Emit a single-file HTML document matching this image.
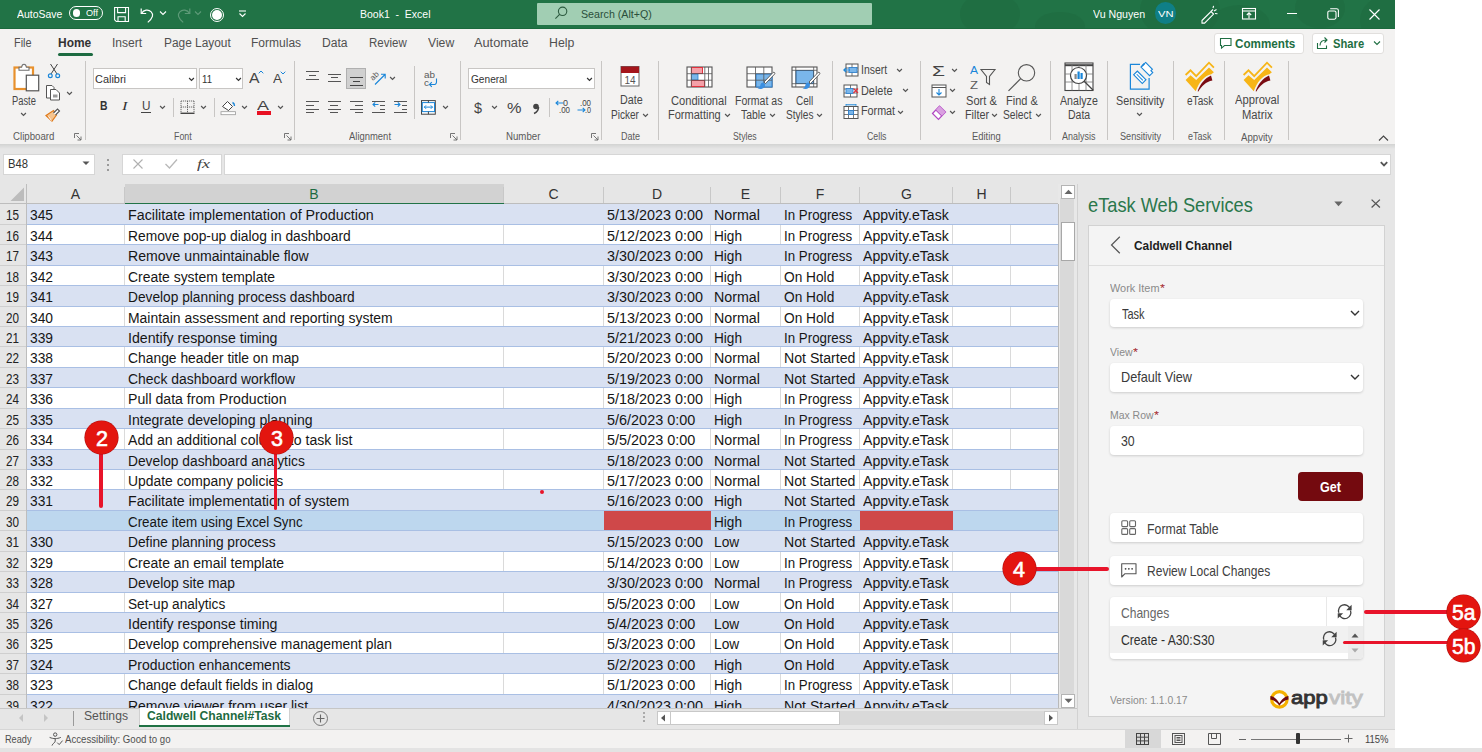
<!DOCTYPE html>
<html><head><meta charset="utf-8">
<style>
*{box-sizing:border-box;margin:0;padding:0}
html,body{width:1482px;height:752px;overflow:hidden;background:#fff;font-family:"Liberation Sans",sans-serif}
.ab{position:absolute}
.tx{white-space:pre}
svg{overflow:visible}
</style></head><body>
<div class="ab" style="left:0;top:0;width:1395px;height:29px;background:#217346;overflow:hidden">
<div class="ab" style="left:960px;top:-8px;width:60px;height:44px;border-radius:50%;background:#1f6a40;opacity:.55"></div>
<div class="ab" style="left:1140px;top:-20px;width:80px;height:60px;border-radius:50%;background:#1f6a40;opacity:.55"></div>
<div class="ab" style="left:1210px;top:5px;width:60px;height:40px;border-radius:50%;background:#1f6a40;opacity:.55"></div>
<div class="ab" style="left:1295px;top:-12px;width:50px;height:40px;border-radius:50%;background:#1f6a40;opacity:.55"></div>
<div class="ab" style="left:1035px;top:12px;width:50px;height:28px;border-radius:50%;background:#1f6a40;opacity:.55"></div>
<div class="ab" style="left:1360px;top:-5px;width:60px;height:50px;border-radius:50%;background:#1f6a40;opacity:.55"></div>
<div class="ab" style="left:0;top:27.5px;width:1395px;height:1.5px;background:#1b693d"></div>
</div>
<div class="ab tx" style="left:17.00px;top:9.00px;font-size:11px;line-height:11px;color:#ffffff;font-weight:normal;font-family:'Liberation Sans';transform:scaleX(0.9497);transform-origin:0 0;">AutoSave</div>
<div class="ab" style="left:68.5px;top:5.5px;width:34px;height:14.5px;border:1.2px solid #fff;border-radius:8px"></div>
<div class="ab" style="left:72.5px;top:9px;width:7.5px;height:7.5px;border-radius:50%;background:#fff"></div>
<div class="ab tx" style="left:85.50px;top:9.00px;font-size:9px;line-height:9px;color:#ffffff;font-weight:normal;font-family:'Liberation Sans';transform:scaleX(1.0136);transform-origin:0 0;">Off</div>
<svg class="ab" style="left:113px;top:6px" width="18" height="18" viewBox="0 0 18 18" fill="none" stroke="#fff" stroke-width="1.1">
<path d="M1.6 1.5H15.5V15.5H3.3L1.6 13.8Z"/><path d="M4.6 1.5V6.6H12.6V1.5"/><path d="M5 15.5V10.8H12.2V15.5"/></svg>
<svg class="ab" style="left:139px;top:6px" width="18" height="18" viewBox="0 0 18 18" fill="none" stroke="#fff" stroke-width="1.2">
<path d="M2.2 2.5v5h5"/><path d="M2.6 7.2c2-3.4 6.8-4.2 9.6-1.4 2.6 2.6 1.8 6.2-3.4 10.6"/></svg>
<svg class="ab" style="left:159px;top:10px" width="8" height="6"><path d="M1 1.5l3 3 3-3" fill="none" stroke="#fff" stroke-width="1.1"/></svg>
<svg class="ab" style="left:174px;top:6px" width="18" height="18" viewBox="0 0 18 18" fill="none" stroke="#5e9a78" stroke-width="1.2">
<path d="M15.8 2.5v5h-5"/><path d="M15.4 7.2c-2-3.4-6.8-4.2-9.6-1.4-2.6 2.6-1.8 6.2 3.4 10.6"/></svg>
<svg class="ab" style="left:194px;top:10px" width="8" height="6"><path d="M1 1.5l3 3 3-3" fill="none" stroke="#5e9a78" stroke-width="1.1"/></svg>
<div class="ab" style="left:209.5px;top:7.5px;width:14.5px;height:14.5px;border-radius:50%;border:1.3px solid #fff"></div>
<div class="ab" style="left:211.8px;top:9.8px;width:10px;height:10px;border-radius:50%;background:#fff"></div>
<svg class="ab" style="left:238px;top:10px" width="9" height="8"><path d="M1 1h7" stroke="#fff" stroke-width="1.1"/><path d="M1.5 3.5l3 3 3-3" fill="none" stroke="#fff" stroke-width="1.1"/></svg>
<div class="ab tx" style="left:359.50px;top:9.00px;font-size:11px;line-height:11px;color:#ffffff;font-weight:normal;font-family:'Liberation Sans';transform:scaleX(0.9530);transform-origin:0 0;">Book1  -  Excel</div>
<div class="ab" style="left:537px;top:2.5px;width:334.5px;height:22.5px;background:#a1ceb3;border-radius:1px"></div>
<svg class="ab" style="left:553px;top:5px" width="16" height="16" viewBox="0 0 16 16" fill="none" stroke="#2c5a3f" stroke-width="1.1">
<circle cx="9.6" cy="6.3" r="4.2"/><path d="M6.6 9.3L2.4 13.6"/></svg>
<div class="ab tx" style="left:581.20px;top:9.00px;font-size:11px;line-height:11px;color:#2b4f3b;font-weight:normal;font-family:'Liberation Sans';transform:scaleX(0.9705);transform-origin:0 0;">Search (Alt+Q)</div>
<div class="ab tx" style="left:1093.00px;top:9.00px;font-size:11px;line-height:11px;color:#ffffff;font-weight:normal;font-family:'Liberation Sans';transform:scaleX(0.9645);transform-origin:0 0;">Vu Nguyen</div>
<div class="ab" style="left:1154.5px;top:2.2px;width:21.6px;height:21.6px;border-radius:50%;background:#0f7f87"></div>
<div class="ab tx" style="left:1157.50px;top:9.00px;font-size:9.5px;line-height:9.5px;color:#ffffff;font-weight:normal;font-family:'Liberation Sans';transform:scaleX(1.1745);transform-origin:0 0;">VN</div>
<svg class="ab" style="left:1199px;top:5px" width="20" height="18" viewBox="0 0 20 18" fill="none" stroke="#fff" stroke-width="1.1">
<path d="M3 15.5l9-9 2.6 2.6-9 9H3z"/><path d="M12 6.5l2-2M15 6l2.5-1.5M14 3l.6-2.2M16 8.5l2.5.3"/></svg>
<svg class="ab" style="left:1241px;top:7px" width="17" height="14" viewBox="0 0 17 14" fill="none" stroke="#fff" stroke-width="1.1">
<rect x="1.5" y="1.5" width="13" height="10.5"/><path d="M1.5 4h13"/><path d="M8 11.5V6M5.8 8l2.2-2.2L10.2 8"/></svg>
<div class="ab" style="left:1286.5px;top:12.5px;width:10px;height:1.1px;background:#fff"></div>
<svg class="ab" style="left:1326px;top:7px" width="14" height="14" viewBox="0 0 14 14" fill="none" stroke="#fff" stroke-width="1.1">
<rect x="1.8" y="4" width="8.2" height="8.2" rx="1.6"/><path d="M4.2 1.8h6.4a1.8 1.8 0 0 1 1.8 1.8v6.4"/></svg>
<svg class="ab" style="left:1368px;top:7.5px" width="13" height="13" viewBox="0 0 13 13" stroke="#fff" stroke-width="1.15"><path d="M1.5 1.5l10 10M11.5 1.5l-10 10"/></svg>
<div class="ab" style="left:0;top:29px;width:1395px;height:30px;background:#f3f2f1"></div>
<div class="ab tx" style="left:13.70px;top:37.00px;font-size:12px;line-height:12px;color:#505050;font-weight:normal;font-family:'Liberation Sans';transform:scaleX(0.9051);transform-origin:0 0;">File</div>
<div class="ab tx" style="left:111.80px;top:37.00px;font-size:12px;line-height:12px;color:#505050;font-weight:normal;font-family:'Liberation Sans';transform:scaleX(1.0063);transform-origin:0 0;">Insert</div>
<div class="ab tx" style="left:163.50px;top:37.00px;font-size:12px;line-height:12px;color:#505050;font-weight:normal;font-family:'Liberation Sans';transform:scaleX(0.9898);transform-origin:0 0;">Page Layout</div>
<div class="ab tx" style="left:251.40px;top:37.00px;font-size:12px;line-height:12px;color:#505050;font-weight:normal;font-family:'Liberation Sans';transform:scaleX(1.0018);transform-origin:0 0;">Formulas</div>
<div class="ab tx" style="left:322.00px;top:37.00px;font-size:12px;line-height:12px;color:#505050;font-weight:normal;font-family:'Liberation Sans';transform:scaleX(1.0100);transform-origin:0 0;">Data</div>
<div class="ab tx" style="left:368.70px;top:37.00px;font-size:12px;line-height:12px;color:#505050;font-weight:normal;font-family:'Liberation Sans';transform:scaleX(0.9582);transform-origin:0 0;">Review</div>
<div class="ab tx" style="left:427.50px;top:37.00px;font-size:12px;line-height:12px;color:#505050;font-weight:normal;font-family:'Liberation Sans';transform:scaleX(1.0158);transform-origin:0 0;">View</div>
<div class="ab tx" style="left:474.40px;top:37.00px;font-size:12px;line-height:12px;color:#505050;font-weight:normal;font-family:'Liberation Sans';transform:scaleX(1.0630);transform-origin:0 0;">Automate</div>
<div class="ab tx" style="left:549.20px;top:37.00px;font-size:12px;line-height:12px;color:#505050;font-weight:normal;font-family:'Liberation Sans';transform:scaleX(1.0251);transform-origin:0 0;">Help</div>
<div class="ab tx" style="left:58.40px;top:37.00px;font-size:12px;line-height:12px;color:#333;font-weight:bold;font-family:'Liberation Sans';transform:scaleX(0.9958);transform-origin:0 0;">Home</div>
<div class="ab" style="left:58px;top:52.8px;width:34.5px;height:3px;background:#1d6b41;border-radius:1.5px"></div>
<div class="ab" style="left:1213.5px;top:33px;width:90px;height:20.5px;background:#fff;border:1px solid #e1dfdd;border-radius:3px"></div>
<svg class="ab" style="left:1219px;top:36.5px" width="14" height="13" viewBox="0 0 14 13" fill="none" stroke="#1e6e42" stroke-width="1.1"><path d="M1.5 1.5h10.5v7H5.5l-3 2.6V8.5H1.5z"/></svg>
<div class="ab tx" style="left:1234.80px;top:38.00px;font-size:12px;line-height:12px;color:#1e6e42;font-weight:bold;font-family:'Liberation Sans';transform:scaleX(0.9724);transform-origin:0 0;">Comments</div>
<div class="ab" style="left:1311.5px;top:33px;width:72.5px;height:20.5px;background:#fff;border:1px solid #e1dfdd;border-radius:3px"></div>
<svg class="ab" style="left:1316px;top:35px" width="14" height="15" viewBox="0 0 14 15" fill="none" stroke="#1e6e42" stroke-width="1.1"><path d="M1.5 8v5.5h9v-3"/><path d="M4 10.5c0-4 2.5-5.5 6.5-5.5M8.5 2.5L11 5l-2.5 2.5"/></svg>
<div class="ab tx" style="left:1333.40px;top:38.00px;font-size:12px;line-height:12px;color:#1e6e42;font-weight:bold;font-family:'Liberation Sans';transform:scaleX(0.9325);transform-origin:0 0;">Share</div>
<svg class="ab" style="left:1373px;top:40px" width="8" height="6"><path d="M1 1.5l3 3 3-3" fill="none" stroke="#1e6e42" stroke-width="1.1"/></svg>
<div class="ab" style="left:0;top:58px;width:1395px;height:86px;background:#f3f2f1"></div>
<svg class="ab" style="left:12px;top:62px" width="30" height="32" viewBox="0 0 30 32"><rect x="2.5" y="5.5" width="18.5" height="21.5" fill="#fff" stroke="#e8912d" stroke-width="2.2"/><path d="M7 8.2V5.2h2.6c.3-2 1.6-3 2.4-3s2.1 1 2.4 3H17v3z" fill="#fff" stroke="#707070" stroke-width="1.1"/><rect x="14.3" y="13.2" width="12.4" height="15.6" fill="#fff" stroke="#555" stroke-width="1.2"/></svg>
<div class="ab tx" style="left:12.20px;top:95.00px;font-size:12px;line-height:12px;color:#474747;font-weight:normal;font-family:'Liberation Sans';transform:scaleX(0.7789);transform-origin:0 0;">Paste</div>
<svg class="ab" style="left:20.2px;top:112px" width="7" height="4.5"><path d="M1.1 1l2.4 2.4L5.9 1" fill="none" stroke="#555" stroke-width="1.2"/></svg>
<svg class="ab" style="left:47px;top:63px" width="14" height="16" viewBox="0 0 14 16"><path d="M3.5 1l6.5 10M10.5 1L4 11" stroke="#444" stroke-width="1"/><circle cx="3.3" cy="12.7" r="1.9" fill="none" stroke="#1a86d9" stroke-width="1.2"/><circle cx="10.7" cy="12.7" r="1.9" fill="none" stroke="#1a86d9" stroke-width="1.2"/></svg>
<svg class="ab" style="left:45px;top:84px" width="17" height="17" viewBox="0 0 17 17"><path d="M1.5 1.5h5.5l2 2v10.5H1.5z" fill="#fff" stroke="#555" stroke-width="1"/><path d="M5.5 5.5h5.5l3.5 3.5v7H5.5z" fill="#fff" stroke="#555" stroke-width="1"/><rect x="8" y="10.5" width="4.5" height="3" fill="#999"/></svg>
<svg class="ab" style="left:65.9px;top:90.7px" width="7" height="4.5"><path d="M1.1 1l2.4 2.4L5.9 1" fill="none" stroke="#555" stroke-width="1.2"/></svg>
<svg class="ab" style="left:45px;top:106px" width="17" height="16" viewBox="0 0 17 16"><path d="M1 9.5l7.5-5 3 4.5-4.5 6z" fill="#f5c48f" stroke="#e07a1a" stroke-width="1.2"/><path d="M8.5 7l4-4 2 2-4 4" fill="#fff" stroke="#555" stroke-width="1.1"/><path d="M3.5 10.5l3 4" stroke="#fff" stroke-width="1"/></svg>
<div class="ab tx" style="left:13.00px;top:132.00px;font-size:10px;line-height:10px;color:#5a5a5a;font-weight:normal;font-family:'Liberation Sans';transform:scaleX(0.9672);transform-origin:0 0;">Clipboard</div>
<svg class="ab" style="left:74px;top:133px" width="8" height="8" viewBox="0 0 8 8" fill="none" stroke="#666" stroke-width=".9"><path d="M.5 5V.5H5"/><path d="M2.5 2.5l4.5 4.5M7 3.5V7H3.5"/></svg>
<div class="ab" style="left:84.5px;top:61px;width:1px;height:78.5px;background:#c8c6c4"></div>
<div class="ab" style="left:92.8px;top:68.2px;width:104.6px;height:20.6px;background:#fff;border:1px solid #c8c6c4"></div>
<div class="ab tx" style="left:94.80px;top:74.00px;font-size:11.5px;line-height:11.5px;color:#333;font-weight:normal;font-family:'Liberation Sans';transform:scaleX(0.9512);transform-origin:0 0;">Calibri</div>
<svg class="ab" style="left:188.1px;top:77px" width="7" height="4.5"><path d="M1.1 1l2.4 2.4L5.9 1" fill="none" stroke="#333" stroke-width="1.2"/></svg>
<div class="ab" style="left:199.4px;top:68.2px;width:44px;height:20.6px;background:#fff;border:1px solid #c8c6c4"></div>
<div class="ab tx" style="left:201.50px;top:74.00px;font-size:11.5px;line-height:11.5px;color:#333;font-weight:normal;font-family:'Liberation Sans';transform:scaleX(0.8377);transform-origin:0 0;">11</div>
<svg class="ab" style="left:234.5px;top:77px" width="7" height="4.5"><path d="M1.1 1l2.4 2.4L5.9 1" fill="none" stroke="#333" stroke-width="1.2"/></svg>
<div class="ab tx" style="left:249.40px;top:70.00px;font-size:15px;line-height:15px;color:#444;font-weight:normal;font-family:'Liberation Sans';transform:scaleX(1.0495);transform-origin:0 0;">A</div>
<svg class="ab" style="left:258px;top:70px" width="6" height="4" viewBox="0 0 6 4"><path d="M.7 3.3L3 1l2.3 2.3" fill="none" stroke="#1a86d9" stroke-width="1"/></svg>
<div class="ab tx" style="left:272.80px;top:73.00px;font-size:12.5px;line-height:12.5px;color:#444;font-weight:normal;font-family:'Liberation Sans';transform:scaleX(1.0795);transform-origin:0 0;">A</div>
<svg class="ab" style="left:280px;top:71px" width="6" height="4" viewBox="0 0 6 4"><path d="M.7 .7L3 3l2.3-2.3" fill="none" stroke="#1a86d9" stroke-width="1"/></svg>
<div class="ab tx" style="left:99.90px;top:100.00px;font-size:12px;line-height:12px;color:#333;font-weight:bold;font-family:'Liberation Sans';transform:scaleX(0.8654);transform-origin:0 0;">B</div>
<div class="ab tx" style="left:121.50px;top:100.00px;font-size:12.5px;line-height:12.5px;color:#333;font-weight:normal;font-family:'Liberation Serif';font-style:italic;transform:scaleX(1.3213);transform-origin:0 0;">I</div>
<div class="ab tx" style="left:141.70px;top:100.00px;font-size:12px;line-height:12px;color:#444;font-weight:normal;font-family:'Liberation Sans';transform:scaleX(0.9808);transform-origin:0 0;">U</div>
<div class="ab" style="left:141.2px;top:112.2px;width:9.5px;height:1px;background:#444"></div>
<svg class="ab" style="left:159.2px;top:105px" width="7" height="4.5"><path d="M1.1 1l2.4 2.4L5.9 1" fill="none" stroke="#555" stroke-width="1.2"/></svg>
<div class="ab" style="left:173.3px;top:98px;width:1px;height:19px;background:#c8c6c4"></div>
<svg class="ab" style="left:179.5px;top:100px" width="15" height="14" viewBox="0 0 15 14"><path d="M1 1h13M1 1v12M14 1v12M7.5 1v12M1 7h13" fill="none" stroke="#666" stroke-width="1" stroke-dasharray="1.2 .8"/><path d="M.5 13.3h14" stroke="#444" stroke-width="1.4"/></svg>
<svg class="ab" style="left:199.8px;top:105px" width="7" height="4.5"><path d="M1.1 1l2.4 2.4L5.9 1" fill="none" stroke="#555" stroke-width="1.2"/></svg>
<div class="ab" style="left:213.9px;top:98px;width:1px;height:19px;background:#c8c6c4"></div>
<svg class="ab" style="left:219.5px;top:99px" width="17" height="17" viewBox="0 0 17 17"><path d="M2.5 7.5l5-5 5 5-4 4z" fill="#fff" stroke="#444" stroke-width="1"/><path d="M12.5 3.5c1.5.7 2 2 2 3.5" fill="none" stroke="#1a86d9" stroke-width="1.4"/><rect x="1" y="12.7" width="14.5" height="3" fill="#fff" stroke="#999" stroke-width=".8"/></svg>
<svg class="ab" style="left:240.9px;top:105px" width="7" height="4.5"><path d="M1.1 1l2.4 2.4L5.9 1" fill="none" stroke="#555" stroke-width="1.2"/></svg>
<div class="ab tx" style="left:257.30px;top:100.00px;font-size:12.5px;line-height:12.5px;color:#444;font-weight:normal;font-family:'Liberation Sans';transform:scaleX(1.4393);transform-origin:0 0;">A</div>
<div class="ab" style="left:256.5px;top:111px;width:14.5px;height:3.5px;background:#e81123"></div>
<svg class="ab" style="left:276.8px;top:105px" width="7" height="4.5"><path d="M1.1 1l2.4 2.4L5.9 1" fill="none" stroke="#555" stroke-width="1.2"/></svg>
<div class="ab tx" style="left:173.60px;top:132.00px;font-size:10px;line-height:10px;color:#5a5a5a;font-weight:normal;font-family:'Liberation Sans';transform:scaleX(0.8846);transform-origin:0 0;">Font</div>
<svg class="ab" style="left:284px;top:133px" width="8" height="8" viewBox="0 0 8 8" fill="none" stroke="#666" stroke-width=".9"><path d="M.5 5V.5H5"/><path d="M2.5 2.5l4.5 4.5M7 3.5V7H3.5"/></svg>
<div class="ab" style="left:293.9px;top:61px;width:1px;height:78.5px;background:#c8c6c4"></div>
<div class="ab" style="left:306px;top:70.5px;width:13px;height:1.4px;background:#555"></div><div class="ab" style="left:309px;top:74.5px;width:7px;height:1.4px;background:#555"></div><div class="ab" style="left:306px;top:78.5px;width:13px;height:1.4px;background:#555"></div>
<div class="ab" style="left:327.8px;top:73.5px;width:13px;height:1.4px;background:#555"></div><div class="ab" style="left:330.8px;top:76.5px;width:7px;height:1.4px;background:#555"></div><div class="ab" style="left:327.8px;top:80.5px;width:13px;height:1.4px;background:#555"></div>
<div class="ab" style="left:346.2px;top:68px;width:19.8px;height:20.7px;background:#d0d0d0;border:1px solid #b0b0b0"></div>
<div class="ab" style="left:349.7px;top:76.5px;width:13px;height:1.4px;background:#444"></div><div class="ab" style="left:352.7px;top:80.5px;width:7px;height:1.4px;background:#444"></div><div class="ab" style="left:349.7px;top:84.5px;width:13px;height:1.4px;background:#444"></div>
<svg class="ab" style="left:370px;top:69px" width="17" height="17" viewBox="0 0 17 17"><text x="0" y="0" font-size="8" font-family="Liberation Sans" fill="#555" transform="translate(3,12) rotate(-45)">ab</text><path d="M5 15.5L15 5.5M11 5.2h4.2v4.2" fill="none" stroke="#1a86d9" stroke-width="1.1"/></svg>
<svg class="ab" style="left:389.1px;top:76px" width="7" height="4.5"><path d="M1.1 1l2.4 2.4L5.9 1" fill="none" stroke="#555" stroke-width="1.2"/></svg>
<div class="ab" style="left:306px;top:100.5px;width:13px;height:1.4px;background:#555"></div><div class="ab" style="left:306px;top:104.5px;width:8px;height:1.4px;background:#555"></div><div class="ab" style="left:306px;top:108.5px;width:13px;height:1.4px;background:#555"></div><div class="ab" style="left:306px;top:111.5px;width:8px;height:1.4px;background:#555"></div>
<div class="ab" style="left:327.8px;top:100.5px;width:13px;height:1.4px;background:#555"></div><div class="ab" style="left:330.3px;top:104.5px;width:8.0px;height:1.4px;background:#555"></div><div class="ab" style="left:327.8px;top:108.5px;width:13px;height:1.4px;background:#555"></div><div class="ab" style="left:330.3px;top:111.5px;width:8.0px;height:1.4px;background:#555"></div>
<div class="ab" style="left:349.7px;top:100.5px;width:13px;height:1.4px;background:#555"></div><div class="ab" style="left:354.7px;top:104.5px;width:8px;height:1.4px;background:#555"></div><div class="ab" style="left:349.7px;top:108.5px;width:13px;height:1.4px;background:#555"></div><div class="ab" style="left:354.7px;top:111.5px;width:8px;height:1.4px;background:#555"></div>
<div class="ab" style="left:372px;top:100.5px;width:13px;height:1.4px;background:#555"></div><div class="ab" style="left:380px;top:104.5px;width:5px;height:1.4px;background:#555"></div><div class="ab" style="left:380px;top:108.5px;width:5px;height:1.4px;background:#555"></div><div class="ab" style="left:372px;top:111.5px;width:13px;height:1.4px;background:#555"></div>
<svg class="ab" style="left:372px;top:102px" width="7" height="5" viewBox="0 0 7 5"><path d="M6.5 2.5H1M3.2 .3L1 2.5l2.2 2.2" fill="none" stroke="#1a86d9" stroke-width="1.1"/></svg>
<div class="ab" style="left:393.8px;top:100.5px;width:13px;height:1.4px;background:#555"></div><div class="ab" style="left:401.8px;top:104.5px;width:5px;height:1.4px;background:#555"></div><div class="ab" style="left:401.8px;top:108.5px;width:5px;height:1.4px;background:#555"></div><div class="ab" style="left:393.8px;top:111.5px;width:13px;height:1.4px;background:#555"></div>
<svg class="ab" style="left:393.8px;top:102px" width="7" height="5" viewBox="0 0 7 5"><path d="M.5 2.5H6M3.8 .3L6 2.5 3.8 4.7" fill="none" stroke="#1a86d9" stroke-width="1.1"/></svg>
<div class="ab" style="left:414px;top:66px;width:1px;height:53px;background:#c8c6c4"></div>
<div class="ab tx" style="left:423.60px;top:71.00px;font-size:9px;line-height:9px;color:#5a5a5a;font-weight:normal;font-family:'Liberation Sans';transform:scaleX(1.0988);transform-origin:0 0;">ab</div>
<div class="ab tx" style="left:423.60px;top:79.00px;font-size:9px;line-height:9px;color:#5a5a5a;font-weight:normal;font-family:'Liberation Sans';transform:scaleX(1.1111);transform-origin:0 0;">c</div>
<svg class="ab" style="left:428px;top:78px" width="10" height="9" viewBox="0 0 10 9"><path d="M8.5 .5v3.5a2.5 2.5 0 0 1-2.5 2.5H1.5M3.8 4.2L1.5 6.5l2.3 2.3" fill="none" stroke="#1a86d9" stroke-width="1.1"/></svg>
<svg class="ab" style="left:421px;top:99.5px" width="15" height="15" viewBox="0 0 15 15"><rect x=".5" y=".6" width="13.8" height="13.6" fill="#fff" stroke="#444" stroke-width="1"/><rect x="1.3" y="2.6" width="12.2" height="9" fill="#fff" stroke="#1a86d9" stroke-width="1"/><path d="M7.4 .6v2M7.4 11.6v2.6" stroke="#444" stroke-width="1"/><path d="M3.3 7.1h8.2M5 5.4L3.3 7.1 5 8.8M9.8 5.4l1.7 1.7-1.7 1.7" fill="none" stroke="#1a86d9" stroke-width="1"/></svg>
<svg class="ab" style="left:441.6px;top:105px" width="7" height="4.5"><path d="M1.1 1l2.4 2.4L5.9 1" fill="none" stroke="#555" stroke-width="1.2"/></svg>
<div class="ab tx" style="left:349.00px;top:132.00px;font-size:10px;line-height:10px;color:#5a5a5a;font-weight:normal;font-family:'Liberation Sans';transform:scaleX(0.9445);transform-origin:0 0;">Alignment</div>
<svg class="ab" style="left:450px;top:133px" width="8" height="8" viewBox="0 0 8 8" fill="none" stroke="#666" stroke-width=".9"><path d="M.5 5V.5H5"/><path d="M2.5 2.5l4.5 4.5M7 3.5V7H3.5"/></svg>
<div class="ab" style="left:459.8px;top:61px;width:1px;height:78.5px;background:#c8c6c4"></div>
<div class="ab" style="left:468.2px;top:68.2px;width:126.5px;height:20.6px;background:#fff;border:1px solid #c8c6c4"></div>
<div class="ab tx" style="left:470.80px;top:74.00px;font-size:11.5px;line-height:11.5px;color:#333;font-weight:normal;font-family:'Liberation Sans';transform:scaleX(0.8799);transform-origin:0 0;">General</div>
<svg class="ab" style="left:585.5px;top:77px" width="7" height="4.5"><path d="M1.1 1l2.4 2.4L5.9 1" fill="none" stroke="#333" stroke-width="1.2"/></svg>
<div class="ab tx" style="left:473.80px;top:101.00px;font-size:14px;line-height:14px;color:#444;font-weight:normal;font-family:'Liberation Sans';transform:scaleX(1.0275);transform-origin:0 0;">$</div>
<svg class="ab" style="left:491.1px;top:105px" width="7" height="4.5"><path d="M1.1 1l2.4 2.4L5.9 1" fill="none" stroke="#555" stroke-width="1.2"/></svg>
<div class="ab tx" style="left:506.50px;top:101.00px;font-size:14px;line-height:14px;color:#444;font-weight:normal;font-family:'Liberation Sans';transform:scaleX(1.1648);transform-origin:0 0;">%</div>
<svg class="ab" style="left:531px;top:103px" width="10" height="11" viewBox="0 0 10 11"><circle cx="5" cy="3.5" r="2.8" fill="#444"/><path d="M7.5 4c0 3-2 5.5-4.5 6.5" fill="none" stroke="#444" stroke-width="1.6"/></svg>
<div class="ab" style="left:549px;top:98px;width:1px;height:19px;background:#c8c6c4"></div>
<div class="ab tx" style="left:563.00px;top:99.00px;font-size:8.5px;line-height:8.5px;color:#444;font-weight:normal;font-family:'Liberation Sans';transform:scaleX(1.0577);transform-origin:0 0;">0</div>
<div class="ab tx" style="left:558.50px;top:106.00px;font-size:8.5px;line-height:8.5px;color:#444;font-weight:normal;font-family:'Liberation Sans';transform:scaleX(0.9309);transform-origin:0 0;">.00</div>
<svg class="ab" style="left:555px;top:100px" width="9" height="6" viewBox="0 0 9 6"><path d="M8.5 3H1M3.3.8L1 3l2.3 2.2" fill="none" stroke="#1a86d9" stroke-width="1.1"/></svg>
<div class="ab tx" style="left:580.00px;top:99.00px;font-size:8.5px;line-height:8.5px;color:#444;font-weight:normal;font-family:'Liberation Sans';transform:scaleX(0.9309);transform-origin:0 0;">.00</div>
<div class="ab tx" style="left:585.00px;top:106.00px;font-size:8.5px;line-height:8.5px;color:#444;font-weight:normal;font-family:'Liberation Sans';transform:scaleX(0.8464);transform-origin:0 0;">.0</div>
<svg class="ab" style="left:577px;top:107px" width="9" height="6" viewBox="0 0 9 6"><path d="M.5 3H8M5.7.8L8 3 5.7 5.2" fill="none" stroke="#1a86d9" stroke-width="1.1"/></svg>
<div class="ab tx" style="left:506.20px;top:132.00px;font-size:10px;line-height:10px;color:#5a5a5a;font-weight:normal;font-family:'Liberation Sans';transform:scaleX(0.9672);transform-origin:0 0;">Number</div>
<svg class="ab" style="left:591px;top:133px" width="8" height="8" viewBox="0 0 8 8" fill="none" stroke="#666" stroke-width=".9"><path d="M.5 5V.5H5"/><path d="M2.5 2.5l4.5 4.5M7 3.5V7H3.5"/></svg>
<div class="ab" style="left:601.3px;top:61px;width:1px;height:78.5px;background:#c8c6c4"></div>
<svg class="ab" style="left:620px;top:65px" width="20" height="22" viewBox="0 0 20 22"><rect x="1" y="1.5" width="18" height="19.5" fill="#fff" stroke="#666" stroke-width="1"/><rect x="1" y="1.5" width="18" height="6.5" fill="#a4151b"/><text x="10" y="18.5" font-size="10" text-anchor="middle" font-family="Liberation Sans" fill="#555">14</text></svg>
<div class="ab tx" style="left:619.50px;top:94.00px;font-size:12px;line-height:12px;color:#474747;font-weight:normal;font-family:'Liberation Sans';transform:scaleX(0.8955);transform-origin:0 0;">Date</div>
<div class="ab tx" style="left:611.30px;top:109.00px;font-size:12px;line-height:12px;color:#474747;font-weight:normal;font-family:'Liberation Sans';transform:scaleX(0.8338);transform-origin:0 0;">Picker</div>
<svg class="ab" style="left:642.3px;top:112.5px" width="7" height="4.5"><path d="M1.1 1l2.4 2.4L5.9 1" fill="none" stroke="#555" stroke-width="1.2"/></svg>
<div class="ab tx" style="left:620.70px;top:132.00px;font-size:10px;line-height:10px;color:#5a5a5a;font-weight:normal;font-family:'Liberation Sans';transform:scaleX(0.8995);transform-origin:0 0;">Date</div>
<div class="ab" style="left:658.0px;top:61px;width:1px;height:78.5px;background:#c8c6c4"></div>
<svg class="ab" style="left:686px;top:65.5px" width="27" height="22" viewBox="0 0 27 22"><rect x="1" y="1" width="25" height="20" fill="#fff" stroke="#555" stroke-width="1.1"/><rect x="5.5" y="1.5" width="11" height="6" fill="#f4a0a8" stroke="#e0323e" stroke-width="1"/><rect x="5.5" y="8" width="6.5" height="6" fill="#7ab6ea" stroke="#2a7fcf" stroke-width=".8"/><rect x="5.5" y="14.5" width="13" height="6" fill="#f4a0a8" stroke="#e0323e" stroke-width="1"/><path d="M1 7.7h25M1 14.2h25M5.3 1v20M18.8 1v20M22.5 1v20" stroke="#555" stroke-width=".8" fill="none"/></svg>
<div class="ab tx" style="left:671.30px;top:95.00px;font-size:12px;line-height:12px;color:#474747;font-weight:normal;font-family:'Liberation Sans';transform:scaleX(0.9277);transform-origin:0 0;">Conditional</div>
<div class="ab tx" style="left:667.60px;top:109.00px;font-size:12px;line-height:12px;color:#474747;font-weight:normal;font-family:'Liberation Sans';transform:scaleX(0.9189);transform-origin:0 0;">Formatting</div>
<svg class="ab" style="left:723.9px;top:112.5px" width="7" height="4.5"><path d="M1.1 1l2.4 2.4L5.9 1" fill="none" stroke="#555" stroke-width="1.2"/></svg>
<svg class="ab" style="left:745.5px;top:65.5px" width="30" height="25" viewBox="0 0 30 25"><rect x="1" y="1" width="25" height="20" fill="#fff" stroke="#555" stroke-width="1.1"/><rect x="10" y="8" width="16" height="13" fill="#7ab6ea" stroke="#2a7fcf" stroke-width="1"/><path d="M1 7.7h25M1 14.2h25M9.5 1v20M17.8 1v20" stroke="#555" stroke-width=".8" fill="none"/><path d="M27 6.5c1.2-.8 2.5.5 1.6 1.6l-9 9.5-1.6-1.6z" fill="#fff" stroke="#555" stroke-width=".9"/><path d="M17.5 16.5c-2 0-3 1.2-3.2 3-.2 1.7-1.3 2.5-2.8 2.7 3.4 1.6 7.4.4 7.6-3.8z" fill="#3a8ee0"/></svg>
<div class="ab tx" style="left:734.60px;top:95.00px;font-size:12px;line-height:12px;color:#474747;font-weight:normal;font-family:'Liberation Sans';transform:scaleX(0.8776);transform-origin:0 0;">Format as</div>
<div class="ab tx" style="left:740.80px;top:109.00px;font-size:12px;line-height:12px;color:#474747;font-weight:normal;font-family:'Liberation Sans';transform:scaleX(0.8645);transform-origin:0 0;">Table</div>
<svg class="ab" style="left:768.9px;top:112.5px" width="7" height="4.5"><path d="M1.1 1l2.4 2.4L5.9 1" fill="none" stroke="#555" stroke-width="1.2"/></svg>
<svg class="ab" style="left:791.3px;top:65.5px" width="30" height="25" viewBox="0 0 30 25"><rect x="1" y="1" width="25" height="20" fill="#fff" stroke="#555" stroke-width="1.1"/><rect x="5" y="4.5" width="17.5" height="13" fill="#7ab6ea" stroke="#2a7fcf" stroke-width="1"/><path d="M1 4.3h25M1 17.7h25M4.8 1v20M22.7 1v20" stroke="#555" stroke-width=".8" fill="none"/><path d="M27 6.5c1.2-.8 2.5.5 1.6 1.6l-9 9.5-1.6-1.6z" fill="#fff" stroke="#555" stroke-width=".9"/><path d="M17.5 16.5c-2 0-3 1.2-3.2 3-.2 1.7-1.3 2.5-2.8 2.7 3.4 1.6 7.4.4 7.6-3.8z" fill="#3a8ee0"/></svg>
<div class="ab tx" style="left:795.50px;top:95.00px;font-size:12px;line-height:12px;color:#474747;font-weight:normal;font-family:'Liberation Sans';transform:scaleX(0.8369);transform-origin:0 0;">Cell</div>
<div class="ab tx" style="left:785.70px;top:109.00px;font-size:12px;line-height:12px;color:#474747;font-weight:normal;font-family:'Liberation Sans';transform:scaleX(0.8416);transform-origin:0 0;">Styles</div>
<svg class="ab" style="left:815.9px;top:112.5px" width="7" height="4.5"><path d="M1.1 1l2.4 2.4L5.9 1" fill="none" stroke="#555" stroke-width="1.2"/></svg>
<div class="ab tx" style="left:733.30px;top:132.00px;font-size:10px;line-height:10px;color:#5a5a5a;font-weight:normal;font-family:'Liberation Sans';transform:scaleX(0.8703);transform-origin:0 0;">Styles</div>
<div class="ab" style="left:832.1px;top:61px;width:1px;height:78.5px;background:#c8c6c4"></div>
<svg class="ab" style="left:842.5px;top:62.5px" width="16" height="14" viewBox="0 0 16 14"><rect x="3" y="1" width="12" height="12" fill="#fff" stroke="#555" stroke-width="1"/><path d="M3 5h12M3 9h12M9 1v12" stroke="#555" stroke-width=".8"/><rect x="6" y="4.5" width="8" height="5" fill="#7ab6ea" stroke="#2a7fcf" stroke-width=".8"/><path d="M7 7H.8M3 4.8L.8 7 3 9.2" fill="none" stroke="#1a86d9" stroke-width="1.1"/></svg>
<div class="ab tx" style="left:860.70px;top:64.00px;font-size:12px;line-height:12px;color:#474747;font-weight:normal;font-family:'Liberation Sans';transform:scaleX(0.8697);transform-origin:0 0;">Insert</div>
<svg class="ab" style="left:895.6px;top:67.5px" width="7" height="4.5"><path d="M1.1 1l2.4 2.4L5.9 1" fill="none" stroke="#555" stroke-width="1.2"/></svg>
<svg class="ab" style="left:842.5px;top:83.5px" width="16" height="14" viewBox="0 0 16 14"><rect x="1" y="1" width="13" height="12" fill="#fff" stroke="#555" stroke-width="1"/><path d="M1 5h13M1 9h13M7.5 1v12" stroke="#555" stroke-width=".8"/><rect x="3" y="4.5" width="7" height="5" fill="#7ab6ea" stroke="#2a7fcf" stroke-width=".8"/><path d="M10.5 4.5l4.5 4.5M15 4.5l-4.5 4.5" stroke="#e0323e" stroke-width="1.2"/></svg>
<div class="ab tx" style="left:860.70px;top:85.00px;font-size:12px;line-height:12px;color:#474747;font-weight:normal;font-family:'Liberation Sans';transform:scaleX(0.9081);transform-origin:0 0;">Delete</div>
<svg class="ab" style="left:901.7px;top:88px" width="7" height="4.5"><path d="M1.1 1l2.4 2.4L5.9 1" fill="none" stroke="#555" stroke-width="1.2"/></svg>
<svg class="ab" style="left:842.5px;top:104px" width="16" height="15" viewBox="0 0 16 15"><rect x="1" y="2.5" width="14" height="12" fill="#fff" stroke="#555" stroke-width="1"/><path d="M1 6.5h14M1 10.5h14M5.5 2.5v12M10.5 2.5v12" stroke="#555" stroke-width=".8"/><rect x="5.5" y="6.5" width="5" height="4" fill="#7ab6ea" stroke="#2a7fcf" stroke-width=".8"/><path d="M3 .8h10M3 .2v1.5M13 .2v1.5" stroke="#1a86d9" stroke-width="1"/></svg>
<div class="ab tx" style="left:860.70px;top:105.00px;font-size:12px;line-height:12px;color:#474747;font-weight:normal;font-family:'Liberation Sans';transform:scaleX(0.8973);transform-origin:0 0;">Format</div>
<svg class="ab" style="left:896.7px;top:109.5px" width="7" height="4.5"><path d="M1.1 1l2.4 2.4L5.9 1" fill="none" stroke="#555" stroke-width="1.2"/></svg>
<div class="ab tx" style="left:866.70px;top:132.00px;font-size:10px;line-height:10px;color:#5a5a5a;font-weight:normal;font-family:'Liberation Sans';transform:scaleX(0.8773);transform-origin:0 0;">Cells</div>
<div class="ab" style="left:920.3px;top:61px;width:1px;height:78.5px;background:#c8c6c4"></div>
<div class="ab tx" style="left:931.60px;top:63.00px;font-size:15px;line-height:15px;color:#444;font-weight:normal;font-family:'Liberation Sans';transform:scaleX(1.4020);transform-origin:0 0;">Σ</div>
<svg class="ab" style="left:950.8px;top:67.5px" width="7" height="4.5"><path d="M1.1 1l2.4 2.4L5.9 1" fill="none" stroke="#555" stroke-width="1.2"/></svg>
<svg class="ab" style="left:930.5px;top:83.5px" width="16" height="14" viewBox="0 0 16 14"><rect x="1" y="1" width="14" height="12" fill="#fff" stroke="#555" stroke-width="1"/><path d="M1 3.5h14" stroke="#555" stroke-width="1"/><path d="M8 5v6M5.5 8.5L8 11l2.5-2.5" fill="none" stroke="#1a86d9" stroke-width="1.1"/></svg>
<svg class="ab" style="left:949.1px;top:88px" width="7" height="4.5"><path d="M1.1 1l2.4 2.4L5.9 1" fill="none" stroke="#555" stroke-width="1.2"/></svg>
<svg class="ab" style="left:930.5px;top:104px" width="16" height="15" viewBox="0 0 16 15"><path d="M1.5 9.5l7-7.5 6 6-7 7.5z" fill="#fff" stroke="#b146c2" stroke-width="1.2"/><path d="M5 6l6 6" stroke="#b146c2" stroke-width="1.2"/><path d="M8.5 2l6 6-3.5 3.7-6-6z" fill="#d9a0e0"/></svg>
<svg class="ab" style="left:948.5px;top:109.5px" width="7" height="4.5"><path d="M1.1 1l2.4 2.4L5.9 1" fill="none" stroke="#555" stroke-width="1.2"/></svg>
<div class="ab tx" style="left:970.00px;top:65.00px;font-size:11px;line-height:11px;color:#1a86d9;font-weight:normal;font-family:'Liberation Sans';transform:scaleX(1.0904);transform-origin:0 0;">A</div>
<div class="ab tx" style="left:970.00px;top:80.00px;font-size:11px;line-height:11px;color:#5a5a5a;font-weight:normal;font-family:'Liberation Sans';transform:scaleX(1.1906);transform-origin:0 0;">Z</div>
<svg class="ab" style="left:980px;top:68px" width="16" height="18" viewBox="0 0 16 18"><path d="M1 1.5h14L9.5 8.5v8l-3-2v-6z" fill="none" stroke="#555" stroke-width="1.1"/></svg>
<div class="ab tx" style="left:966.20px;top:95.00px;font-size:12px;line-height:12px;color:#474747;font-weight:normal;font-family:'Liberation Sans';transform:scaleX(0.9237);transform-origin:0 0;">Sort &amp;</div>
<div class="ab tx" style="left:964.60px;top:109.00px;font-size:12px;line-height:12px;color:#474747;font-weight:normal;font-family:'Liberation Sans';transform:scaleX(0.9000);transform-origin:0 0;">Filter</div>
<svg class="ab" style="left:991.4px;top:112.5px" width="7" height="4.5"><path d="M1.1 1l2.4 2.4L5.9 1" fill="none" stroke="#555" stroke-width="1.2"/></svg>
<svg class="ab" style="left:1007px;top:62.5px" width="30" height="29" viewBox="0 0 30 29"><circle cx="19.5" cy="9.8" r="8.2" fill="none" stroke="#555" stroke-width="1.1"/><path d="M13.7 15.6L1.5 27.8" stroke="#555" stroke-width="1.2"/></svg>
<div class="ab tx" style="left:1006.10px;top:95.00px;font-size:12px;line-height:12px;color:#474747;font-weight:normal;font-family:'Liberation Sans';transform:scaleX(0.9169);transform-origin:0 0;">Find &amp;</div>
<div class="ab tx" style="left:1002.90px;top:109.00px;font-size:12px;line-height:12px;color:#474747;font-weight:normal;font-family:'Liberation Sans';transform:scaleX(0.8545);transform-origin:0 0;">Select</div>
<svg class="ab" style="left:1034.5px;top:112.5px" width="7" height="4.5"><path d="M1.1 1l2.4 2.4L5.9 1" fill="none" stroke="#555" stroke-width="1.2"/></svg>
<div class="ab tx" style="left:971.60px;top:132.00px;font-size:10px;line-height:10px;color:#5a5a5a;font-weight:normal;font-family:'Liberation Sans';transform:scaleX(0.9386);transform-origin:0 0;">Editing</div>
<div class="ab" style="left:1050.3px;top:61px;width:1px;height:78.5px;background:#c8c6c4"></div>
<svg class="ab" style="left:1063.5px;top:61.5px" width="31" height="31" viewBox="0 0 31 31"><rect x="1" y="1" width="28" height="27.5" fill="#fff" stroke="#444" stroke-width="1.1"/><path d="M1 3.2h28" stroke="#444" stroke-width="2"/><path d="M1 12h28M1 20h28M8 3v25.5M15 3v25.5M22 3v25.5" stroke="#777" stroke-width=".8"/><circle cx="14.5" cy="13.5" r="8" fill="#fff" stroke="#444" stroke-width="1.2"/><path d="M20.2 19.2l9 9" stroke="#444" stroke-width="1.3"/><rect x="10.5" y="12" width="2.2" height="5" fill="#888"/><rect x="13.5" y="9.5" width="2.2" height="7.5" fill="#1a86d9"/><rect x="16.5" y="11" width="2.2" height="6" fill="#1a86d9"/></svg>
<div class="ab tx" style="left:1060.10px;top:95.00px;font-size:12px;line-height:12px;color:#474747;font-weight:normal;font-family:'Liberation Sans';transform:scaleX(0.8854);transform-origin:0 0;">Analyze</div>
<div class="ab tx" style="left:1068.10px;top:109.00px;font-size:12px;line-height:12px;color:#474747;font-weight:normal;font-family:'Liberation Sans';transform:scaleX(0.8758);transform-origin:0 0;">Data</div>
<div class="ab tx" style="left:1062.30px;top:132.00px;font-size:10px;line-height:10px;color:#5a5a5a;font-weight:normal;font-family:'Liberation Sans';transform:scaleX(0.8970);transform-origin:0 0;">Analysis</div>
<div class="ab" style="left:1106.5px;top:61px;width:1px;height:78.5px;background:#c8c6c4"></div>
<svg class="ab" style="left:1128px;top:62px" width="28" height="28" viewBox="0 0 28 28"><path d="M12 2.3H2.4V27.2H21.1V16" fill="none" stroke="#1a86d9" stroke-width="1.2"/><g transform="translate(11.8,15.3) rotate(45)"><rect x="-6.1" y="-2.6" width="12.2" height="5.2" fill="#fff" stroke="#1a86d9" stroke-width="1.1"/><path d="M-4.3 0H4.3" stroke="#1a86d9" stroke-width="1"/></g><g transform="translate(19.6,7.1) rotate(45)"><path d="M-6.1 -3.3H3.5V-1.2H6.1V3.3H-6.1Z" fill="#fff" stroke="#1a86d9" stroke-width="1.1"/><path d="M-6.1 -1.6V1.8" stroke="#1a86d9" stroke-width="1.6"/></g></svg>
<div class="ab tx" style="left:1115.80px;top:95.00px;font-size:12px;line-height:12px;color:#474747;font-weight:normal;font-family:'Liberation Sans';transform:scaleX(0.8960);transform-origin:0 0;">Sensitivity</div>
<svg class="ab" style="left:1135.9px;top:111.7px" width="7" height="4.5"><path d="M1.1 1l2.4 2.4L5.9 1" fill="none" stroke="#555" stroke-width="1.2"/></svg>
<div class="ab tx" style="left:1119.50px;top:132.00px;font-size:10px;line-height:10px;color:#5a5a5a;font-weight:normal;font-family:'Liberation Sans';transform:scaleX(0.9108);transform-origin:0 0;">Sensitivity</div>
<div class="ab" style="left:1173.0px;top:61px;width:1px;height:78.5px;background:#c8c6c4"></div>
<svg class="ab" style="left:1175px;top:58px" width="50" height="37" viewBox="0 0 50 37"><path d="M10.6 17L15.5 12.3 21.2 18.2 34 4.7 38.9 9.6" fill="none" stroke="#f7b516" stroke-width="1.8" stroke-linejoin="miter"/><path d="M10.6 21.9L15.5 17.2 21.2 22.1 34 9.4 38.9 14.3 36.4 16.2C29 18 24 24 20.8 33.2z" fill="#f7b516"/><path d="M22.6 33.2C25 26 30 20 36 17.4L37.4 22.4C31 23.5 26.5 28 23.4 33.4z" fill="#7a0c12"/></svg>
<div class="ab tx" style="left:1186.50px;top:95.00px;font-size:12px;line-height:12px;color:#474747;font-weight:normal;font-family:'Liberation Sans';transform:scaleX(0.8390);transform-origin:0 0;">eTask</div>
<div class="ab tx" style="left:1187.50px;top:132.00px;font-size:10px;line-height:10px;color:#5a5a5a;font-weight:normal;font-family:'Liberation Sans';transform:scaleX(0.8958);transform-origin:0 0;">eTask</div>
<div class="ab" style="left:1223.8px;top:61px;width:1px;height:78.5px;background:#c8c6c4"></div>
<svg class="ab" style="left:1232.5px;top:58px" width="50" height="37" viewBox="0 0 50 37"><path d="M10.6 17L15.5 12.3 21.2 18.2 34 4.7 38.9 9.6" fill="none" stroke="#f7b516" stroke-width="1.8" stroke-linejoin="miter"/><path d="M10.6 21.9L15.5 17.2 21.2 22.1 34 9.4 38.9 14.3 36.4 16.2C29 18 24 24 20.8 33.2z" fill="#f7b516"/><path d="M22.6 33.2C25 26 30 20 36 17.4L37.4 22.4C31 23.5 26.5 28 23.4 33.4z" fill="#7a0c12"/></svg>
<div class="ab tx" style="left:1234.60px;top:94.00px;font-size:12px;line-height:12px;color:#474747;font-weight:normal;font-family:'Liberation Sans';transform:scaleX(0.9333);transform-origin:0 0;">Approval</div>
<div class="ab tx" style="left:1242.20px;top:109.00px;font-size:12px;line-height:12px;color:#474747;font-weight:normal;font-family:'Liberation Sans';transform:scaleX(0.9337);transform-origin:0 0;">Matrix</div>
<div class="ab tx" style="left:1241.10px;top:133.00px;font-size:10px;line-height:10px;color:#5a5a5a;font-weight:normal;font-family:'Liberation Sans';transform:scaleX(0.9636);transform-origin:0 0;">Appvity</div>
<div class="ab" style="left:1288.1px;top:61px;width:1px;height:78.5px;background:#c8c6c4"></div>
<svg class="ab" style="left:1378px;top:135px" width="11" height="6" viewBox="0 0 11 6"><path d="M1 5.5L5.5 1 10 5.5" fill="none" stroke="#444" stroke-width="1.1"/></svg>
<div class="ab" style="left:0;top:144px;width:1395px;height:40px;background:#e6e6e6"></div>
<div class="ab" style="left:0;top:144px;width:1395px;height:5px;background:linear-gradient(#d2d3d2,#e6e6e6)"></div>
<div class="ab" style="left:2.5px;top:153.5px;width:92px;height:21px;background:#fff;border:1px solid #d6d6d6"></div>
<div class="ab tx" style="left:7.50px;top:158.00px;font-size:12px;line-height:12px;color:#333;font-weight:normal;font-family:'Liberation Sans';transform:scaleX(0.9367);transform-origin:0 0;">B48</div>
<svg class="ab" style="left:82px;top:161px" width="8" height="5"><path d="M0.5 0.5h7L4 4z" fill="#555"/></svg>
<div class="ab" style="left:107px;top:159px;width:2px;height:2px;background:#9a9a9a"></div>
<div class="ab" style="left:107px;top:164px;width:2px;height:2px;background:#9a9a9a"></div>
<div class="ab" style="left:107px;top:169px;width:2px;height:2px;background:#9a9a9a"></div>
<div class="ab" style="left:121.5px;top:153.5px;width:100px;height:21px;background:#fff;border:1px solid #d6d6d6"></div>
<svg class="ab" style="left:132px;top:158px" width="12" height="12"><path d="M1.5 1.5l9 9M10.5 1.5l-9 9" stroke="#b0b0b0" stroke-width="1.1"/></svg>
<svg class="ab" style="left:164px;top:158px" width="14" height="12"><path d="M1.5 6l4 4 7.5-8.5" fill="none" stroke="#b8b8b8" stroke-width="1.3"/></svg>
<div class="ab tx" style="left:197.00px;top:157.00px;font-size:13px;line-height:13px;color:#444;font-weight:normal;font-family:'Liberation Serif';font-style:italic;transform:scaleX(1.3857);transform-origin:0 0;">fx</div>
<div class="ab" style="left:224px;top:153.5px;width:1167px;height:21px;background:#fff;border:1px solid #d6d6d6"></div>
<svg class="ab" style="left:1379.5px;top:161px" width="8" height="6"><path d="M.8 1.2l3.2 3.3 3.2-3.3" fill="none" stroke="#555" stroke-width="1.8"/></svg>
<div class="ab" style="left:0;top:184px;width:1058px;height:524px;overflow:hidden">
<div class="ab" style="left:0;top:-184px;width:1058px;height:752px">
<div class="ab" style="left:0;top:184px;width:1058px;height:20px;background:#e6e6e6"></div>
<svg class="ab" style="left:0;top:184px" width="26" height="20"><polygon points="24,3.5 24,17 10.5,17" fill="#bcbcbc"/></svg>
<div class="ab tx" style="left:70.50px;top:187.00px;font-size:14px;line-height:14px;color:#333;font-weight:normal;font-family:'Liberation Sans';width:10px;text-align:center;">A</div>
<div class="ab" style="left:124.5px;top:184px;width:379.0px;height:19px;background:#d2d2d2"></div>
<div class="ab tx" style="left:309.00px;top:187.00px;font-size:14px;line-height:14px;color:#1e6b41;font-weight:normal;font-family:'Liberation Sans';width:10px;text-align:center;">B</div>
<div class="ab" style="left:124.0px;top:187px;width:1px;height:16.5px;background:#c8c8c8"></div>
<div class="ab tx" style="left:548.50px;top:187.00px;font-size:14px;line-height:14px;color:#333;font-weight:normal;font-family:'Liberation Sans';width:10px;text-align:center;">C</div>
<div class="ab" style="left:503.0px;top:187px;width:1px;height:16.5px;background:#c8c8c8"></div>
<div class="ab tx" style="left:652.00px;top:187.00px;font-size:14px;line-height:14px;color:#333;font-weight:normal;font-family:'Liberation Sans';width:10px;text-align:center;">D</div>
<div class="ab" style="left:603.0px;top:187px;width:1px;height:16.5px;background:#c8c8c8"></div>
<div class="ab tx" style="left:740.50px;top:187.00px;font-size:14px;line-height:14px;color:#333;font-weight:normal;font-family:'Liberation Sans';width:10px;text-align:center;">E</div>
<div class="ab" style="left:710.0px;top:187px;width:1px;height:16.5px;background:#c8c8c8"></div>
<div class="ab tx" style="left:815.00px;top:187.00px;font-size:14px;line-height:14px;color:#333;font-weight:normal;font-family:'Liberation Sans';width:10px;text-align:center;">F</div>
<div class="ab" style="left:780.0px;top:187px;width:1px;height:16.5px;background:#c8c8c8"></div>
<div class="ab tx" style="left:901.00px;top:187.00px;font-size:14px;line-height:14px;color:#333;font-weight:normal;font-family:'Liberation Sans';width:10px;text-align:center;">G</div>
<div class="ab" style="left:859.0px;top:187px;width:1px;height:16.5px;background:#c8c8c8"></div>
<div class="ab tx" style="left:976.50px;top:187.00px;font-size:14px;line-height:14px;color:#333;font-weight:normal;font-family:'Liberation Sans';width:10px;text-align:center;">H</div>
<div class="ab" style="left:952.0px;top:187px;width:1px;height:16.5px;background:#c8c8c8"></div>
<div class="ab" style="left:1010.0px;top:187px;width:1px;height:16.5px;background:#c8c8c8"></div>
<div class="ab" style="left:0;top:204px;width:26px;height:504px;background:#e6e6e6"></div>
<div class="ab" style="left:26px;top:184px;width:1px;height:524px;background:#bdbdbd"></div>
<div class="ab" style="left:27px;top:204px;width:1031px;height:20px;background:#d9e1f2"></div>
<div class="ab tx" style="left:6.00px;top:208.00px;font-size:14px;line-height:14px;color:#222;font-weight:normal;font-family:'Liberation Sans';transform:scaleX(0.8348);transform-origin:0 0;">15</div>
<div class="ab" style="left:0;top:203px;width:26px;height:1px;background:#cfcfcf"></div>
<div class="ab tx" style="left:29.50px;top:208.00px;font-size:14px;line-height:14px;color:#161616;font-weight:normal;font-family:'Liberation Sans';transform:scaleX(0.9862);transform-origin:0 0;">345</div>
<div class="ab tx" style="left:127.50px;top:208.00px;font-size:14px;line-height:14px;color:#161616;font-weight:normal;font-family:'Liberation Sans';transform:scaleX(1.0189);transform-origin:0 0;">Facilitate implementation of Production</div>
<div class="ab tx" style="left:606.50px;top:208.00px;font-size:14px;line-height:14px;color:#161616;font-weight:normal;font-family:'Liberation Sans';transform:scaleX(1.0276);transform-origin:0 0;">5/13/2023 0:00</div>
<div class="ab tx" style="left:713.50px;top:208.00px;font-size:14px;line-height:14px;color:#161616;font-weight:normal;font-family:'Liberation Sans';transform:scaleX(1.0171);transform-origin:0 0;">Normal</div>
<div class="ab tx" style="left:783.50px;top:208.00px;font-size:14px;line-height:14px;color:#161616;font-weight:normal;font-family:'Liberation Sans';transform:scaleX(0.9513);transform-origin:0 0;">In Progress</div>
<div class="ab tx" style="left:862.50px;top:208.00px;font-size:14px;line-height:14px;color:#161616;font-weight:normal;font-family:'Liberation Sans';transform:scaleX(1.0049);transform-origin:0 0;">Appvity.eTask</div>
<div class="ab" style="left:27px;top:225px;width:1031px;height:19px;background:#ffffff"></div>
<div class="ab" style="left:124px;top:225px;width:1px;height:19px;background:#dadada"></div>
<div class="ab" style="left:503px;top:225px;width:1px;height:19px;background:#dadada"></div>
<div class="ab" style="left:603px;top:225px;width:1px;height:19px;background:#dadada"></div>
<div class="ab" style="left:710px;top:225px;width:1px;height:19px;background:#dadada"></div>
<div class="ab" style="left:780px;top:225px;width:1px;height:19px;background:#dadada"></div>
<div class="ab" style="left:859px;top:225px;width:1px;height:19px;background:#dadada"></div>
<div class="ab" style="left:952px;top:225px;width:1px;height:19px;background:#dadada"></div>
<div class="ab" style="left:1010px;top:225px;width:1px;height:19px;background:#dadada"></div>
<div class="ab" style="left:27px;top:224px;width:1031px;height:1px;background:#a9bfe4"></div>
<div class="ab tx" style="left:6.00px;top:229.00px;font-size:14px;line-height:14px;color:#222;font-weight:normal;font-family:'Liberation Sans';transform:scaleX(0.8348);transform-origin:0 0;">16</div>
<div class="ab" style="left:0;top:224px;width:26px;height:1px;background:#cfcfcf"></div>
<div class="ab tx" style="left:29.50px;top:229.00px;font-size:14px;line-height:14px;color:#161616;font-weight:normal;font-family:'Liberation Sans';transform:scaleX(0.9862);transform-origin:0 0;">344</div>
<div class="ab tx" style="left:127.50px;top:229.00px;font-size:14px;line-height:14px;color:#161616;font-weight:normal;font-family:'Liberation Sans';transform:scaleX(0.9866);transform-origin:0 0;">Remove pop-up dialog in dashboard</div>
<div class="ab tx" style="left:606.50px;top:229.00px;font-size:14px;line-height:14px;color:#161616;font-weight:normal;font-family:'Liberation Sans';transform:scaleX(1.0276);transform-origin:0 0;">5/12/2023 0:00</div>
<div class="ab tx" style="left:713.50px;top:229.00px;font-size:14px;line-height:14px;color:#161616;font-weight:normal;font-family:'Liberation Sans';transform:scaleX(0.9727);transform-origin:0 0;">High</div>
<div class="ab tx" style="left:783.50px;top:229.00px;font-size:14px;line-height:14px;color:#161616;font-weight:normal;font-family:'Liberation Sans';transform:scaleX(0.9513);transform-origin:0 0;">In Progress</div>
<div class="ab tx" style="left:862.50px;top:229.00px;font-size:14px;line-height:14px;color:#161616;font-weight:normal;font-family:'Liberation Sans';transform:scaleX(1.0049);transform-origin:0 0;">Appvity.eTask</div>
<div class="ab" style="left:27px;top:245px;width:1031px;height:20px;background:#d9e1f2"></div>
<div class="ab" style="left:27px;top:244px;width:1031px;height:1px;background:#a9bfe4"></div>
<div class="ab tx" style="left:6.00px;top:249.00px;font-size:14px;line-height:14px;color:#222;font-weight:normal;font-family:'Liberation Sans';transform:scaleX(0.8348);transform-origin:0 0;">17</div>
<div class="ab" style="left:0;top:244px;width:26px;height:1px;background:#cfcfcf"></div>
<div class="ab tx" style="left:29.50px;top:249.00px;font-size:14px;line-height:14px;color:#161616;font-weight:normal;font-family:'Liberation Sans';transform:scaleX(0.9862);transform-origin:0 0;">343</div>
<div class="ab tx" style="left:127.50px;top:249.00px;font-size:14px;line-height:14px;color:#161616;font-weight:normal;font-family:'Liberation Sans';transform:scaleX(1.0053);transform-origin:0 0;">Remove unmaintainable flow</div>
<div class="ab tx" style="left:606.50px;top:249.00px;font-size:14px;line-height:14px;color:#161616;font-weight:normal;font-family:'Liberation Sans';transform:scaleX(1.0276);transform-origin:0 0;">3/30/2023 0:00</div>
<div class="ab tx" style="left:713.50px;top:249.00px;font-size:14px;line-height:14px;color:#161616;font-weight:normal;font-family:'Liberation Sans';transform:scaleX(0.9727);transform-origin:0 0;">High</div>
<div class="ab tx" style="left:783.50px;top:249.00px;font-size:14px;line-height:14px;color:#161616;font-weight:normal;font-family:'Liberation Sans';transform:scaleX(0.9513);transform-origin:0 0;">In Progress</div>
<div class="ab tx" style="left:862.50px;top:249.00px;font-size:14px;line-height:14px;color:#161616;font-weight:normal;font-family:'Liberation Sans';transform:scaleX(1.0049);transform-origin:0 0;">Appvity.eTask</div>
<div class="ab" style="left:27px;top:266px;width:1031px;height:19px;background:#ffffff"></div>
<div class="ab" style="left:124px;top:266px;width:1px;height:19px;background:#dadada"></div>
<div class="ab" style="left:503px;top:266px;width:1px;height:19px;background:#dadada"></div>
<div class="ab" style="left:603px;top:266px;width:1px;height:19px;background:#dadada"></div>
<div class="ab" style="left:710px;top:266px;width:1px;height:19px;background:#dadada"></div>
<div class="ab" style="left:780px;top:266px;width:1px;height:19px;background:#dadada"></div>
<div class="ab" style="left:859px;top:266px;width:1px;height:19px;background:#dadada"></div>
<div class="ab" style="left:952px;top:266px;width:1px;height:19px;background:#dadada"></div>
<div class="ab" style="left:1010px;top:266px;width:1px;height:19px;background:#dadada"></div>
<div class="ab" style="left:27px;top:265px;width:1031px;height:1px;background:#a9bfe4"></div>
<div class="ab tx" style="left:6.00px;top:270.00px;font-size:14px;line-height:14px;color:#222;font-weight:normal;font-family:'Liberation Sans';transform:scaleX(0.8348);transform-origin:0 0;">18</div>
<div class="ab" style="left:0;top:265px;width:26px;height:1px;background:#cfcfcf"></div>
<div class="ab tx" style="left:29.50px;top:270.00px;font-size:14px;line-height:14px;color:#161616;font-weight:normal;font-family:'Liberation Sans';transform:scaleX(0.9862);transform-origin:0 0;">342</div>
<div class="ab tx" style="left:127.50px;top:270.00px;font-size:14px;line-height:14px;color:#161616;font-weight:normal;font-family:'Liberation Sans';transform:scaleX(0.9948);transform-origin:0 0;">Create system template</div>
<div class="ab tx" style="left:606.50px;top:270.00px;font-size:14px;line-height:14px;color:#161616;font-weight:normal;font-family:'Liberation Sans';transform:scaleX(1.0276);transform-origin:0 0;">3/30/2023 0:00</div>
<div class="ab tx" style="left:713.50px;top:270.00px;font-size:14px;line-height:14px;color:#161616;font-weight:normal;font-family:'Liberation Sans';transform:scaleX(0.9727);transform-origin:0 0;">High</div>
<div class="ab tx" style="left:783.50px;top:270.00px;font-size:14px;line-height:14px;color:#161616;font-weight:normal;font-family:'Liberation Sans';transform:scaleX(0.9790);transform-origin:0 0;">On Hold</div>
<div class="ab tx" style="left:862.50px;top:270.00px;font-size:14px;line-height:14px;color:#161616;font-weight:normal;font-family:'Liberation Sans';transform:scaleX(1.0049);transform-origin:0 0;">Appvity.eTask</div>
<div class="ab" style="left:27px;top:286px;width:1031px;height:20px;background:#d9e1f2"></div>
<div class="ab" style="left:27px;top:285px;width:1031px;height:1px;background:#a9bfe4"></div>
<div class="ab tx" style="left:6.00px;top:290.00px;font-size:14px;line-height:14px;color:#222;font-weight:normal;font-family:'Liberation Sans';transform:scaleX(0.8348);transform-origin:0 0;">19</div>
<div class="ab" style="left:0;top:285px;width:26px;height:1px;background:#cfcfcf"></div>
<div class="ab tx" style="left:29.50px;top:290.00px;font-size:14px;line-height:14px;color:#161616;font-weight:normal;font-family:'Liberation Sans';transform:scaleX(0.9862);transform-origin:0 0;">341</div>
<div class="ab tx" style="left:127.50px;top:290.00px;font-size:14px;line-height:14px;color:#161616;font-weight:normal;font-family:'Liberation Sans';transform:scaleX(0.9807);transform-origin:0 0;">Develop planning process dashboard</div>
<div class="ab tx" style="left:606.50px;top:290.00px;font-size:14px;line-height:14px;color:#161616;font-weight:normal;font-family:'Liberation Sans';transform:scaleX(1.0276);transform-origin:0 0;">3/30/2023 0:00</div>
<div class="ab tx" style="left:713.50px;top:290.00px;font-size:14px;line-height:14px;color:#161616;font-weight:normal;font-family:'Liberation Sans';transform:scaleX(1.0171);transform-origin:0 0;">Normal</div>
<div class="ab tx" style="left:783.50px;top:290.00px;font-size:14px;line-height:14px;color:#161616;font-weight:normal;font-family:'Liberation Sans';transform:scaleX(0.9790);transform-origin:0 0;">On Hold</div>
<div class="ab tx" style="left:862.50px;top:290.00px;font-size:14px;line-height:14px;color:#161616;font-weight:normal;font-family:'Liberation Sans';transform:scaleX(1.0049);transform-origin:0 0;">Appvity.eTask</div>
<div class="ab" style="left:27px;top:307px;width:1031px;height:19px;background:#ffffff"></div>
<div class="ab" style="left:124px;top:307px;width:1px;height:19px;background:#dadada"></div>
<div class="ab" style="left:503px;top:307px;width:1px;height:19px;background:#dadada"></div>
<div class="ab" style="left:603px;top:307px;width:1px;height:19px;background:#dadada"></div>
<div class="ab" style="left:710px;top:307px;width:1px;height:19px;background:#dadada"></div>
<div class="ab" style="left:780px;top:307px;width:1px;height:19px;background:#dadada"></div>
<div class="ab" style="left:859px;top:307px;width:1px;height:19px;background:#dadada"></div>
<div class="ab" style="left:952px;top:307px;width:1px;height:19px;background:#dadada"></div>
<div class="ab" style="left:1010px;top:307px;width:1px;height:19px;background:#dadada"></div>
<div class="ab" style="left:27px;top:306px;width:1031px;height:1px;background:#a9bfe4"></div>
<div class="ab tx" style="left:6.00px;top:311.00px;font-size:14px;line-height:14px;color:#222;font-weight:normal;font-family:'Liberation Sans';transform:scaleX(0.8348);transform-origin:0 0;">20</div>
<div class="ab" style="left:0;top:306px;width:26px;height:1px;background:#cfcfcf"></div>
<div class="ab tx" style="left:29.50px;top:311.00px;font-size:14px;line-height:14px;color:#161616;font-weight:normal;font-family:'Liberation Sans';transform:scaleX(0.9862);transform-origin:0 0;">340</div>
<div class="ab tx" style="left:127.50px;top:311.00px;font-size:14px;line-height:14px;color:#161616;font-weight:normal;font-family:'Liberation Sans';transform:scaleX(0.9942);transform-origin:0 0;">Maintain assessment and reporting system</div>
<div class="ab tx" style="left:606.50px;top:311.00px;font-size:14px;line-height:14px;color:#161616;font-weight:normal;font-family:'Liberation Sans';transform:scaleX(1.0276);transform-origin:0 0;">5/13/2023 0:00</div>
<div class="ab tx" style="left:713.50px;top:311.00px;font-size:14px;line-height:14px;color:#161616;font-weight:normal;font-family:'Liberation Sans';transform:scaleX(1.0171);transform-origin:0 0;">Normal</div>
<div class="ab tx" style="left:783.50px;top:311.00px;font-size:14px;line-height:14px;color:#161616;font-weight:normal;font-family:'Liberation Sans';transform:scaleX(0.9790);transform-origin:0 0;">On Hold</div>
<div class="ab tx" style="left:862.50px;top:311.00px;font-size:14px;line-height:14px;color:#161616;font-weight:normal;font-family:'Liberation Sans';transform:scaleX(1.0049);transform-origin:0 0;">Appvity.eTask</div>
<div class="ab" style="left:27px;top:327px;width:1031px;height:19px;background:#d9e1f2"></div>
<div class="ab" style="left:27px;top:326px;width:1031px;height:1px;background:#a9bfe4"></div>
<div class="ab tx" style="left:6.00px;top:331.00px;font-size:14px;line-height:14px;color:#222;font-weight:normal;font-family:'Liberation Sans';transform:scaleX(0.8348);transform-origin:0 0;">21</div>
<div class="ab" style="left:0;top:326px;width:26px;height:1px;background:#cfcfcf"></div>
<div class="ab tx" style="left:29.50px;top:331.00px;font-size:14px;line-height:14px;color:#161616;font-weight:normal;font-family:'Liberation Sans';transform:scaleX(0.9862);transform-origin:0 0;">339</div>
<div class="ab tx" style="left:127.50px;top:331.00px;font-size:14px;line-height:14px;color:#161616;font-weight:normal;font-family:'Liberation Sans';transform:scaleX(1.0111);transform-origin:0 0;">Identify response timing</div>
<div class="ab tx" style="left:606.50px;top:331.00px;font-size:14px;line-height:14px;color:#161616;font-weight:normal;font-family:'Liberation Sans';transform:scaleX(1.0276);transform-origin:0 0;">5/21/2023 0:00</div>
<div class="ab tx" style="left:713.50px;top:331.00px;font-size:14px;line-height:14px;color:#161616;font-weight:normal;font-family:'Liberation Sans';transform:scaleX(0.9727);transform-origin:0 0;">High</div>
<div class="ab tx" style="left:783.50px;top:331.00px;font-size:14px;line-height:14px;color:#161616;font-weight:normal;font-family:'Liberation Sans';transform:scaleX(0.9513);transform-origin:0 0;">In Progress</div>
<div class="ab tx" style="left:862.50px;top:331.00px;font-size:14px;line-height:14px;color:#161616;font-weight:normal;font-family:'Liberation Sans';transform:scaleX(1.0049);transform-origin:0 0;">Appvity.eTask</div>
<div class="ab" style="left:27px;top:347px;width:1031px;height:20px;background:#ffffff"></div>
<div class="ab" style="left:124px;top:347px;width:1px;height:20px;background:#dadada"></div>
<div class="ab" style="left:503px;top:347px;width:1px;height:20px;background:#dadada"></div>
<div class="ab" style="left:603px;top:347px;width:1px;height:20px;background:#dadada"></div>
<div class="ab" style="left:710px;top:347px;width:1px;height:20px;background:#dadada"></div>
<div class="ab" style="left:780px;top:347px;width:1px;height:20px;background:#dadada"></div>
<div class="ab" style="left:859px;top:347px;width:1px;height:20px;background:#dadada"></div>
<div class="ab" style="left:952px;top:347px;width:1px;height:20px;background:#dadada"></div>
<div class="ab" style="left:1010px;top:347px;width:1px;height:20px;background:#dadada"></div>
<div class="ab" style="left:27px;top:346px;width:1031px;height:1px;background:#a9bfe4"></div>
<div class="ab tx" style="left:6.00px;top:351.00px;font-size:14px;line-height:14px;color:#222;font-weight:normal;font-family:'Liberation Sans';transform:scaleX(0.8348);transform-origin:0 0;">22</div>
<div class="ab" style="left:0;top:346px;width:26px;height:1px;background:#cfcfcf"></div>
<div class="ab tx" style="left:29.50px;top:351.00px;font-size:14px;line-height:14px;color:#161616;font-weight:normal;font-family:'Liberation Sans';transform:scaleX(0.9862);transform-origin:0 0;">338</div>
<div class="ab tx" style="left:127.50px;top:351.00px;font-size:14px;line-height:14px;color:#161616;font-weight:normal;font-family:'Liberation Sans';transform:scaleX(0.9901);transform-origin:0 0;">Change header title on map</div>
<div class="ab tx" style="left:606.50px;top:351.00px;font-size:14px;line-height:14px;color:#161616;font-weight:normal;font-family:'Liberation Sans';transform:scaleX(1.0276);transform-origin:0 0;">5/20/2023 0:00</div>
<div class="ab tx" style="left:713.50px;top:351.00px;font-size:14px;line-height:14px;color:#161616;font-weight:normal;font-family:'Liberation Sans';transform:scaleX(1.0171);transform-origin:0 0;">Normal</div>
<div class="ab tx" style="left:783.50px;top:351.00px;font-size:14px;line-height:14px;color:#161616;font-weight:normal;font-family:'Liberation Sans';transform:scaleX(1.0085);transform-origin:0 0;">Not Started</div>
<div class="ab tx" style="left:862.50px;top:351.00px;font-size:14px;line-height:14px;color:#161616;font-weight:normal;font-family:'Liberation Sans';transform:scaleX(1.0049);transform-origin:0 0;">Appvity.eTask</div>
<div class="ab" style="left:27px;top:368px;width:1031px;height:19px;background:#d9e1f2"></div>
<div class="ab" style="left:27px;top:367px;width:1031px;height:1px;background:#a9bfe4"></div>
<div class="ab tx" style="left:6.00px;top:372.00px;font-size:14px;line-height:14px;color:#222;font-weight:normal;font-family:'Liberation Sans';transform:scaleX(0.8348);transform-origin:0 0;">23</div>
<div class="ab" style="left:0;top:367px;width:26px;height:1px;background:#cfcfcf"></div>
<div class="ab tx" style="left:29.50px;top:372.00px;font-size:14px;line-height:14px;color:#161616;font-weight:normal;font-family:'Liberation Sans';transform:scaleX(0.9862);transform-origin:0 0;">337</div>
<div class="ab tx" style="left:127.50px;top:372.00px;font-size:14px;line-height:14px;color:#161616;font-weight:normal;font-family:'Liberation Sans';transform:scaleX(0.9946);transform-origin:0 0;">Check dashboard workflow</div>
<div class="ab tx" style="left:606.50px;top:372.00px;font-size:14px;line-height:14px;color:#161616;font-weight:normal;font-family:'Liberation Sans';transform:scaleX(1.0276);transform-origin:0 0;">5/19/2023 0:00</div>
<div class="ab tx" style="left:713.50px;top:372.00px;font-size:14px;line-height:14px;color:#161616;font-weight:normal;font-family:'Liberation Sans';transform:scaleX(1.0171);transform-origin:0 0;">Normal</div>
<div class="ab tx" style="left:783.50px;top:372.00px;font-size:14px;line-height:14px;color:#161616;font-weight:normal;font-family:'Liberation Sans';transform:scaleX(1.0085);transform-origin:0 0;">Not Started</div>
<div class="ab tx" style="left:862.50px;top:372.00px;font-size:14px;line-height:14px;color:#161616;font-weight:normal;font-family:'Liberation Sans';transform:scaleX(1.0049);transform-origin:0 0;">Appvity.eTask</div>
<div class="ab" style="left:27px;top:388px;width:1031px;height:20px;background:#ffffff"></div>
<div class="ab" style="left:124px;top:388px;width:1px;height:20px;background:#dadada"></div>
<div class="ab" style="left:503px;top:388px;width:1px;height:20px;background:#dadada"></div>
<div class="ab" style="left:603px;top:388px;width:1px;height:20px;background:#dadada"></div>
<div class="ab" style="left:710px;top:388px;width:1px;height:20px;background:#dadada"></div>
<div class="ab" style="left:780px;top:388px;width:1px;height:20px;background:#dadada"></div>
<div class="ab" style="left:859px;top:388px;width:1px;height:20px;background:#dadada"></div>
<div class="ab" style="left:952px;top:388px;width:1px;height:20px;background:#dadada"></div>
<div class="ab" style="left:1010px;top:388px;width:1px;height:20px;background:#dadada"></div>
<div class="ab" style="left:27px;top:387px;width:1031px;height:1px;background:#a9bfe4"></div>
<div class="ab tx" style="left:6.00px;top:392.00px;font-size:14px;line-height:14px;color:#222;font-weight:normal;font-family:'Liberation Sans';transform:scaleX(0.8348);transform-origin:0 0;">24</div>
<div class="ab" style="left:0;top:387px;width:26px;height:1px;background:#cfcfcf"></div>
<div class="ab tx" style="left:29.50px;top:392.00px;font-size:14px;line-height:14px;color:#161616;font-weight:normal;font-family:'Liberation Sans';transform:scaleX(0.9862);transform-origin:0 0;">336</div>
<div class="ab tx" style="left:127.50px;top:392.00px;font-size:14px;line-height:14px;color:#161616;font-weight:normal;font-family:'Liberation Sans';transform:scaleX(1.0082);transform-origin:0 0;">Pull data from Production</div>
<div class="ab tx" style="left:606.50px;top:392.00px;font-size:14px;line-height:14px;color:#161616;font-weight:normal;font-family:'Liberation Sans';transform:scaleX(1.0276);transform-origin:0 0;">5/18/2023 0:00</div>
<div class="ab tx" style="left:713.50px;top:392.00px;font-size:14px;line-height:14px;color:#161616;font-weight:normal;font-family:'Liberation Sans';transform:scaleX(0.9727);transform-origin:0 0;">High</div>
<div class="ab tx" style="left:783.50px;top:392.00px;font-size:14px;line-height:14px;color:#161616;font-weight:normal;font-family:'Liberation Sans';transform:scaleX(0.9513);transform-origin:0 0;">In Progress</div>
<div class="ab tx" style="left:862.50px;top:392.00px;font-size:14px;line-height:14px;color:#161616;font-weight:normal;font-family:'Liberation Sans';transform:scaleX(1.0049);transform-origin:0 0;">Appvity.eTask</div>
<div class="ab" style="left:27px;top:409px;width:1031px;height:19px;background:#d9e1f2"></div>
<div class="ab" style="left:27px;top:408px;width:1031px;height:1px;background:#a9bfe4"></div>
<div class="ab tx" style="left:6.00px;top:413.00px;font-size:14px;line-height:14px;color:#222;font-weight:normal;font-family:'Liberation Sans';transform:scaleX(0.8348);transform-origin:0 0;">25</div>
<div class="ab" style="left:0;top:408px;width:26px;height:1px;background:#cfcfcf"></div>
<div class="ab tx" style="left:29.50px;top:413.00px;font-size:14px;line-height:14px;color:#161616;font-weight:normal;font-family:'Liberation Sans';transform:scaleX(0.9862);transform-origin:0 0;">335</div>
<div class="ab tx" style="left:127.50px;top:413.00px;font-size:14px;line-height:14px;color:#161616;font-weight:normal;font-family:'Liberation Sans';transform:scaleX(1.0047);transform-origin:0 0;">Integrate developing planning</div>
<div class="ab tx" style="left:606.50px;top:413.00px;font-size:14px;line-height:14px;color:#161616;font-weight:normal;font-family:'Liberation Sans';transform:scaleX(1.0313);transform-origin:0 0;">5/6/2023 0:00</div>
<div class="ab tx" style="left:713.50px;top:413.00px;font-size:14px;line-height:14px;color:#161616;font-weight:normal;font-family:'Liberation Sans';transform:scaleX(0.9727);transform-origin:0 0;">High</div>
<div class="ab tx" style="left:783.50px;top:413.00px;font-size:14px;line-height:14px;color:#161616;font-weight:normal;font-family:'Liberation Sans';transform:scaleX(0.9513);transform-origin:0 0;">In Progress</div>
<div class="ab tx" style="left:862.50px;top:413.00px;font-size:14px;line-height:14px;color:#161616;font-weight:normal;font-family:'Liberation Sans';transform:scaleX(1.0049);transform-origin:0 0;">Appvity.eTask</div>
<div class="ab" style="left:27px;top:429px;width:1031px;height:20px;background:#ffffff"></div>
<div class="ab" style="left:124px;top:429px;width:1px;height:20px;background:#dadada"></div>
<div class="ab" style="left:503px;top:429px;width:1px;height:20px;background:#dadada"></div>
<div class="ab" style="left:603px;top:429px;width:1px;height:20px;background:#dadada"></div>
<div class="ab" style="left:710px;top:429px;width:1px;height:20px;background:#dadada"></div>
<div class="ab" style="left:780px;top:429px;width:1px;height:20px;background:#dadada"></div>
<div class="ab" style="left:859px;top:429px;width:1px;height:20px;background:#dadada"></div>
<div class="ab" style="left:952px;top:429px;width:1px;height:20px;background:#dadada"></div>
<div class="ab" style="left:1010px;top:429px;width:1px;height:20px;background:#dadada"></div>
<div class="ab" style="left:27px;top:428px;width:1031px;height:1px;background:#a9bfe4"></div>
<div class="ab tx" style="left:6.00px;top:433.00px;font-size:14px;line-height:14px;color:#222;font-weight:normal;font-family:'Liberation Sans';transform:scaleX(0.8348);transform-origin:0 0;">26</div>
<div class="ab" style="left:0;top:428px;width:26px;height:1px;background:#cfcfcf"></div>
<div class="ab tx" style="left:29.50px;top:433.00px;font-size:14px;line-height:14px;color:#161616;font-weight:normal;font-family:'Liberation Sans';transform:scaleX(0.9862);transform-origin:0 0;">334</div>
<div class="ab tx" style="left:127.50px;top:433.00px;font-size:14px;line-height:14px;color:#161616;font-weight:normal;font-family:'Liberation Sans';transform:scaleX(1.0047);transform-origin:0 0;">Add an additional column to task list</div>
<div class="ab tx" style="left:606.50px;top:433.00px;font-size:14px;line-height:14px;color:#161616;font-weight:normal;font-family:'Liberation Sans';transform:scaleX(1.0313);transform-origin:0 0;">5/5/2023 0:00</div>
<div class="ab tx" style="left:713.50px;top:433.00px;font-size:14px;line-height:14px;color:#161616;font-weight:normal;font-family:'Liberation Sans';transform:scaleX(1.0171);transform-origin:0 0;">Normal</div>
<div class="ab tx" style="left:783.50px;top:433.00px;font-size:14px;line-height:14px;color:#161616;font-weight:normal;font-family:'Liberation Sans';transform:scaleX(0.9513);transform-origin:0 0;">In Progress</div>
<div class="ab tx" style="left:862.50px;top:433.00px;font-size:14px;line-height:14px;color:#161616;font-weight:normal;font-family:'Liberation Sans';transform:scaleX(1.0049);transform-origin:0 0;">Appvity.eTask</div>
<div class="ab" style="left:27px;top:450px;width:1031px;height:19px;background:#d9e1f2"></div>
<div class="ab" style="left:27px;top:449px;width:1031px;height:1px;background:#a9bfe4"></div>
<div class="ab tx" style="left:6.00px;top:454.00px;font-size:14px;line-height:14px;color:#222;font-weight:normal;font-family:'Liberation Sans';transform:scaleX(0.8348);transform-origin:0 0;">27</div>
<div class="ab" style="left:0;top:449px;width:26px;height:1px;background:#cfcfcf"></div>
<div class="ab tx" style="left:29.50px;top:454.00px;font-size:14px;line-height:14px;color:#161616;font-weight:normal;font-family:'Liberation Sans';transform:scaleX(0.9862);transform-origin:0 0;">333</div>
<div class="ab tx" style="left:127.50px;top:454.00px;font-size:14px;line-height:14px;color:#161616;font-weight:normal;font-family:'Liberation Sans';transform:scaleX(0.9832);transform-origin:0 0;">Develop dashboard analytics</div>
<div class="ab tx" style="left:606.50px;top:454.00px;font-size:14px;line-height:14px;color:#161616;font-weight:normal;font-family:'Liberation Sans';transform:scaleX(1.0276);transform-origin:0 0;">5/18/2023 0:00</div>
<div class="ab tx" style="left:713.50px;top:454.00px;font-size:14px;line-height:14px;color:#161616;font-weight:normal;font-family:'Liberation Sans';transform:scaleX(1.0171);transform-origin:0 0;">Normal</div>
<div class="ab tx" style="left:783.50px;top:454.00px;font-size:14px;line-height:14px;color:#161616;font-weight:normal;font-family:'Liberation Sans';transform:scaleX(1.0085);transform-origin:0 0;">Not Started</div>
<div class="ab tx" style="left:862.50px;top:454.00px;font-size:14px;line-height:14px;color:#161616;font-weight:normal;font-family:'Liberation Sans';transform:scaleX(1.0049);transform-origin:0 0;">Appvity.eTask</div>
<div class="ab" style="left:27px;top:470px;width:1031px;height:19px;background:#ffffff"></div>
<div class="ab" style="left:124px;top:470px;width:1px;height:19px;background:#dadada"></div>
<div class="ab" style="left:503px;top:470px;width:1px;height:19px;background:#dadada"></div>
<div class="ab" style="left:603px;top:470px;width:1px;height:19px;background:#dadada"></div>
<div class="ab" style="left:710px;top:470px;width:1px;height:19px;background:#dadada"></div>
<div class="ab" style="left:780px;top:470px;width:1px;height:19px;background:#dadada"></div>
<div class="ab" style="left:859px;top:470px;width:1px;height:19px;background:#dadada"></div>
<div class="ab" style="left:952px;top:470px;width:1px;height:19px;background:#dadada"></div>
<div class="ab" style="left:1010px;top:470px;width:1px;height:19px;background:#dadada"></div>
<div class="ab" style="left:27px;top:469px;width:1031px;height:1px;background:#a9bfe4"></div>
<div class="ab tx" style="left:6.00px;top:474.00px;font-size:14px;line-height:14px;color:#222;font-weight:normal;font-family:'Liberation Sans';transform:scaleX(0.8348);transform-origin:0 0;">28</div>
<div class="ab" style="left:0;top:469px;width:26px;height:1px;background:#cfcfcf"></div>
<div class="ab tx" style="left:29.50px;top:474.00px;font-size:14px;line-height:14px;color:#161616;font-weight:normal;font-family:'Liberation Sans';transform:scaleX(0.9862);transform-origin:0 0;">332</div>
<div class="ab tx" style="left:127.50px;top:474.00px;font-size:14px;line-height:14px;color:#161616;font-weight:normal;font-family:'Liberation Sans';transform:scaleX(0.9918);transform-origin:0 0;">Update company policies</div>
<div class="ab tx" style="left:606.50px;top:474.00px;font-size:14px;line-height:14px;color:#161616;font-weight:normal;font-family:'Liberation Sans';transform:scaleX(1.0276);transform-origin:0 0;">5/17/2023 0:00</div>
<div class="ab tx" style="left:713.50px;top:474.00px;font-size:14px;line-height:14px;color:#161616;font-weight:normal;font-family:'Liberation Sans';transform:scaleX(1.0171);transform-origin:0 0;">Normal</div>
<div class="ab tx" style="left:783.50px;top:474.00px;font-size:14px;line-height:14px;color:#161616;font-weight:normal;font-family:'Liberation Sans';transform:scaleX(1.0085);transform-origin:0 0;">Not Started</div>
<div class="ab tx" style="left:862.50px;top:474.00px;font-size:14px;line-height:14px;color:#161616;font-weight:normal;font-family:'Liberation Sans';transform:scaleX(1.0049);transform-origin:0 0;">Appvity.eTask</div>
<div class="ab" style="left:27px;top:490px;width:1031px;height:20px;background:#d9e1f2"></div>
<div class="ab" style="left:27px;top:489px;width:1031px;height:1px;background:#a9bfe4"></div>
<div class="ab tx" style="left:6.00px;top:494.00px;font-size:14px;line-height:14px;color:#222;font-weight:normal;font-family:'Liberation Sans';transform:scaleX(0.8348);transform-origin:0 0;">29</div>
<div class="ab" style="left:0;top:489px;width:26px;height:1px;background:#cfcfcf"></div>
<div class="ab tx" style="left:29.50px;top:494.00px;font-size:14px;line-height:14px;color:#161616;font-weight:normal;font-family:'Liberation Sans';transform:scaleX(0.9862);transform-origin:0 0;">331</div>
<div class="ab tx" style="left:127.50px;top:494.00px;font-size:14px;line-height:14px;color:#161616;font-weight:normal;font-family:'Liberation Sans';transform:scaleX(1.0121);transform-origin:0 0;">Facilitate implementation of system</div>
<div class="ab tx" style="left:606.50px;top:494.00px;font-size:14px;line-height:14px;color:#161616;font-weight:normal;font-family:'Liberation Sans';transform:scaleX(1.0276);transform-origin:0 0;">5/16/2023 0:00</div>
<div class="ab tx" style="left:713.50px;top:494.00px;font-size:14px;line-height:14px;color:#161616;font-weight:normal;font-family:'Liberation Sans';transform:scaleX(0.9727);transform-origin:0 0;">High</div>
<div class="ab tx" style="left:783.50px;top:494.00px;font-size:14px;line-height:14px;color:#161616;font-weight:normal;font-family:'Liberation Sans';transform:scaleX(1.0085);transform-origin:0 0;">Not Started</div>
<div class="ab tx" style="left:862.50px;top:494.00px;font-size:14px;line-height:14px;color:#161616;font-weight:normal;font-family:'Liberation Sans';transform:scaleX(1.0049);transform-origin:0 0;">Appvity.eTask</div>
<div class="ab" style="left:27px;top:511px;width:1031px;height:19px;background:#bdd7ee"></div>
<div class="ab" style="left:27px;top:510px;width:1031px;height:1px;background:#a9bfe4"></div>
<div class="ab tx" style="left:6.00px;top:515.00px;font-size:14px;line-height:14px;color:#222;font-weight:normal;font-family:'Liberation Sans';transform:scaleX(0.8348);transform-origin:0 0;">30</div>
<div class="ab" style="left:0;top:510px;width:26px;height:1px;background:#cfcfcf"></div>
<div class="ab" style="left:603.5px;top:511px;width:107.0px;height:19px;background:#cf4849"></div>
<div class="ab" style="left:859.5px;top:511px;width:93.0px;height:19px;background:#cf4849"></div>
<div class="ab tx" style="left:127.50px;top:515.00px;font-size:14px;line-height:14px;color:#161616;font-weight:normal;font-family:'Liberation Sans';transform:scaleX(0.9553);transform-origin:0 0;">Create item using Excel Sync</div>
<div class="ab tx" style="left:713.50px;top:515.00px;font-size:14px;line-height:14px;color:#161616;font-weight:normal;font-family:'Liberation Sans';transform:scaleX(0.9727);transform-origin:0 0;">High</div>
<div class="ab tx" style="left:783.50px;top:515.00px;font-size:14px;line-height:14px;color:#161616;font-weight:normal;font-family:'Liberation Sans';transform:scaleX(0.9513);transform-origin:0 0;">In Progress</div>
<div class="ab" style="left:27px;top:531px;width:1031px;height:20px;background:#d9e1f2"></div>
<div class="ab" style="left:27px;top:530px;width:1031px;height:1px;background:#a9bfe4"></div>
<div class="ab tx" style="left:6.00px;top:535.00px;font-size:14px;line-height:14px;color:#222;font-weight:normal;font-family:'Liberation Sans';transform:scaleX(0.8348);transform-origin:0 0;">31</div>
<div class="ab" style="left:0;top:530px;width:26px;height:1px;background:#cfcfcf"></div>
<div class="ab tx" style="left:29.50px;top:535.00px;font-size:14px;line-height:14px;color:#161616;font-weight:normal;font-family:'Liberation Sans';transform:scaleX(0.9862);transform-origin:0 0;">330</div>
<div class="ab tx" style="left:127.50px;top:535.00px;font-size:14px;line-height:14px;color:#161616;font-weight:normal;font-family:'Liberation Sans';transform:scaleX(0.9821);transform-origin:0 0;">Define planning process</div>
<div class="ab tx" style="left:606.50px;top:535.00px;font-size:14px;line-height:14px;color:#161616;font-weight:normal;font-family:'Liberation Sans';transform:scaleX(1.0276);transform-origin:0 0;">5/15/2023 0:00</div>
<div class="ab tx" style="left:713.50px;top:535.00px;font-size:14px;line-height:14px;color:#161616;font-weight:normal;font-family:'Liberation Sans';transform:scaleX(0.9808);transform-origin:0 0;">Low</div>
<div class="ab tx" style="left:783.50px;top:535.00px;font-size:14px;line-height:14px;color:#161616;font-weight:normal;font-family:'Liberation Sans';transform:scaleX(1.0085);transform-origin:0 0;">Not Started</div>
<div class="ab tx" style="left:862.50px;top:535.00px;font-size:14px;line-height:14px;color:#161616;font-weight:normal;font-family:'Liberation Sans';transform:scaleX(1.0049);transform-origin:0 0;">Appvity.eTask</div>
<div class="ab" style="left:27px;top:552px;width:1031px;height:19px;background:#ffffff"></div>
<div class="ab" style="left:124px;top:552px;width:1px;height:19px;background:#dadada"></div>
<div class="ab" style="left:503px;top:552px;width:1px;height:19px;background:#dadada"></div>
<div class="ab" style="left:603px;top:552px;width:1px;height:19px;background:#dadada"></div>
<div class="ab" style="left:710px;top:552px;width:1px;height:19px;background:#dadada"></div>
<div class="ab" style="left:780px;top:552px;width:1px;height:19px;background:#dadada"></div>
<div class="ab" style="left:859px;top:552px;width:1px;height:19px;background:#dadada"></div>
<div class="ab" style="left:952px;top:552px;width:1px;height:19px;background:#dadada"></div>
<div class="ab" style="left:1010px;top:552px;width:1px;height:19px;background:#dadada"></div>
<div class="ab" style="left:27px;top:551px;width:1031px;height:1px;background:#a9bfe4"></div>
<div class="ab tx" style="left:6.00px;top:556.00px;font-size:14px;line-height:14px;color:#222;font-weight:normal;font-family:'Liberation Sans';transform:scaleX(0.8348);transform-origin:0 0;">32</div>
<div class="ab" style="left:0;top:551px;width:26px;height:1px;background:#cfcfcf"></div>
<div class="ab tx" style="left:29.50px;top:556.00px;font-size:14px;line-height:14px;color:#161616;font-weight:normal;font-family:'Liberation Sans';transform:scaleX(0.9862);transform-origin:0 0;">329</div>
<div class="ab tx" style="left:127.50px;top:556.00px;font-size:14px;line-height:14px;color:#161616;font-weight:normal;font-family:'Liberation Sans';transform:scaleX(0.9982);transform-origin:0 0;">Create an email template</div>
<div class="ab tx" style="left:606.50px;top:556.00px;font-size:14px;line-height:14px;color:#161616;font-weight:normal;font-family:'Liberation Sans';transform:scaleX(1.0276);transform-origin:0 0;">5/14/2023 0:00</div>
<div class="ab tx" style="left:713.50px;top:556.00px;font-size:14px;line-height:14px;color:#161616;font-weight:normal;font-family:'Liberation Sans';transform:scaleX(0.9808);transform-origin:0 0;">Low</div>
<div class="ab tx" style="left:783.50px;top:556.00px;font-size:14px;line-height:14px;color:#161616;font-weight:normal;font-family:'Liberation Sans';transform:scaleX(0.9513);transform-origin:0 0;">In Progress</div>
<div class="ab tx" style="left:862.50px;top:556.00px;font-size:14px;line-height:14px;color:#161616;font-weight:normal;font-family:'Liberation Sans';transform:scaleX(1.0049);transform-origin:0 0;">Appvity.eTask</div>
<div class="ab" style="left:27px;top:572px;width:1031px;height:20px;background:#d9e1f2"></div>
<div class="ab" style="left:27px;top:571px;width:1031px;height:1px;background:#a9bfe4"></div>
<div class="ab tx" style="left:6.00px;top:576.00px;font-size:14px;line-height:14px;color:#222;font-weight:normal;font-family:'Liberation Sans';transform:scaleX(0.8348);transform-origin:0 0;">33</div>
<div class="ab" style="left:0;top:571px;width:26px;height:1px;background:#cfcfcf"></div>
<div class="ab tx" style="left:29.50px;top:576.00px;font-size:14px;line-height:14px;color:#161616;font-weight:normal;font-family:'Liberation Sans';transform:scaleX(0.9862);transform-origin:0 0;">328</div>
<div class="ab tx" style="left:127.50px;top:576.00px;font-size:14px;line-height:14px;color:#161616;font-weight:normal;font-family:'Liberation Sans';transform:scaleX(0.9878);transform-origin:0 0;">Develop site map</div>
<div class="ab tx" style="left:606.50px;top:576.00px;font-size:14px;line-height:14px;color:#161616;font-weight:normal;font-family:'Liberation Sans';transform:scaleX(1.0276);transform-origin:0 0;">3/30/2023 0:00</div>
<div class="ab tx" style="left:713.50px;top:576.00px;font-size:14px;line-height:14px;color:#161616;font-weight:normal;font-family:'Liberation Sans';transform:scaleX(1.0171);transform-origin:0 0;">Normal</div>
<div class="ab tx" style="left:783.50px;top:576.00px;font-size:14px;line-height:14px;color:#161616;font-weight:normal;font-family:'Liberation Sans';transform:scaleX(0.9513);transform-origin:0 0;">In Progress</div>
<div class="ab tx" style="left:862.50px;top:576.00px;font-size:14px;line-height:14px;color:#161616;font-weight:normal;font-family:'Liberation Sans';transform:scaleX(1.0049);transform-origin:0 0;">Appvity.eTask</div>
<div class="ab" style="left:27px;top:593px;width:1031px;height:19px;background:#ffffff"></div>
<div class="ab" style="left:124px;top:593px;width:1px;height:19px;background:#dadada"></div>
<div class="ab" style="left:503px;top:593px;width:1px;height:19px;background:#dadada"></div>
<div class="ab" style="left:603px;top:593px;width:1px;height:19px;background:#dadada"></div>
<div class="ab" style="left:710px;top:593px;width:1px;height:19px;background:#dadada"></div>
<div class="ab" style="left:780px;top:593px;width:1px;height:19px;background:#dadada"></div>
<div class="ab" style="left:859px;top:593px;width:1px;height:19px;background:#dadada"></div>
<div class="ab" style="left:952px;top:593px;width:1px;height:19px;background:#dadada"></div>
<div class="ab" style="left:1010px;top:593px;width:1px;height:19px;background:#dadada"></div>
<div class="ab" style="left:27px;top:592px;width:1031px;height:1px;background:#a9bfe4"></div>
<div class="ab tx" style="left:6.00px;top:597.00px;font-size:14px;line-height:14px;color:#222;font-weight:normal;font-family:'Liberation Sans';transform:scaleX(0.8348);transform-origin:0 0;">34</div>
<div class="ab" style="left:0;top:592px;width:26px;height:1px;background:#cfcfcf"></div>
<div class="ab tx" style="left:29.50px;top:597.00px;font-size:14px;line-height:14px;color:#161616;font-weight:normal;font-family:'Liberation Sans';transform:scaleX(0.9862);transform-origin:0 0;">327</div>
<div class="ab tx" style="left:127.50px;top:597.00px;font-size:14px;line-height:14px;color:#161616;font-weight:normal;font-family:'Liberation Sans';transform:scaleX(0.9763);transform-origin:0 0;">Set-up analytics</div>
<div class="ab tx" style="left:606.50px;top:597.00px;font-size:14px;line-height:14px;color:#161616;font-weight:normal;font-family:'Liberation Sans';transform:scaleX(1.0313);transform-origin:0 0;">5/5/2023 0:00</div>
<div class="ab tx" style="left:713.50px;top:597.00px;font-size:14px;line-height:14px;color:#161616;font-weight:normal;font-family:'Liberation Sans';transform:scaleX(0.9808);transform-origin:0 0;">Low</div>
<div class="ab tx" style="left:783.50px;top:597.00px;font-size:14px;line-height:14px;color:#161616;font-weight:normal;font-family:'Liberation Sans';transform:scaleX(0.9790);transform-origin:0 0;">On Hold</div>
<div class="ab tx" style="left:862.50px;top:597.00px;font-size:14px;line-height:14px;color:#161616;font-weight:normal;font-family:'Liberation Sans';transform:scaleX(1.0049);transform-origin:0 0;">Appvity.eTask</div>
<div class="ab" style="left:27px;top:613px;width:1031px;height:19px;background:#d9e1f2"></div>
<div class="ab" style="left:27px;top:612px;width:1031px;height:1px;background:#a9bfe4"></div>
<div class="ab tx" style="left:6.00px;top:617.00px;font-size:14px;line-height:14px;color:#222;font-weight:normal;font-family:'Liberation Sans';transform:scaleX(0.8348);transform-origin:0 0;">35</div>
<div class="ab" style="left:0;top:612px;width:26px;height:1px;background:#cfcfcf"></div>
<div class="ab tx" style="left:29.50px;top:617.00px;font-size:14px;line-height:14px;color:#161616;font-weight:normal;font-family:'Liberation Sans';transform:scaleX(0.9862);transform-origin:0 0;">326</div>
<div class="ab tx" style="left:127.50px;top:617.00px;font-size:14px;line-height:14px;color:#161616;font-weight:normal;font-family:'Liberation Sans';transform:scaleX(1.0111);transform-origin:0 0;">Identify response timing</div>
<div class="ab tx" style="left:606.50px;top:617.00px;font-size:14px;line-height:14px;color:#161616;font-weight:normal;font-family:'Liberation Sans';transform:scaleX(1.0313);transform-origin:0 0;">5/4/2023 0:00</div>
<div class="ab tx" style="left:713.50px;top:617.00px;font-size:14px;line-height:14px;color:#161616;font-weight:normal;font-family:'Liberation Sans';transform:scaleX(0.9808);transform-origin:0 0;">Low</div>
<div class="ab tx" style="left:783.50px;top:617.00px;font-size:14px;line-height:14px;color:#161616;font-weight:normal;font-family:'Liberation Sans';transform:scaleX(0.9790);transform-origin:0 0;">On Hold</div>
<div class="ab tx" style="left:862.50px;top:617.00px;font-size:14px;line-height:14px;color:#161616;font-weight:normal;font-family:'Liberation Sans';transform:scaleX(1.0049);transform-origin:0 0;">Appvity.eTask</div>
<div class="ab" style="left:27px;top:633px;width:1031px;height:20px;background:#ffffff"></div>
<div class="ab" style="left:124px;top:633px;width:1px;height:20px;background:#dadada"></div>
<div class="ab" style="left:503px;top:633px;width:1px;height:20px;background:#dadada"></div>
<div class="ab" style="left:603px;top:633px;width:1px;height:20px;background:#dadada"></div>
<div class="ab" style="left:710px;top:633px;width:1px;height:20px;background:#dadada"></div>
<div class="ab" style="left:780px;top:633px;width:1px;height:20px;background:#dadada"></div>
<div class="ab" style="left:859px;top:633px;width:1px;height:20px;background:#dadada"></div>
<div class="ab" style="left:952px;top:633px;width:1px;height:20px;background:#dadada"></div>
<div class="ab" style="left:1010px;top:633px;width:1px;height:20px;background:#dadada"></div>
<div class="ab" style="left:27px;top:632px;width:1031px;height:1px;background:#a9bfe4"></div>
<div class="ab tx" style="left:6.00px;top:637.00px;font-size:14px;line-height:14px;color:#222;font-weight:normal;font-family:'Liberation Sans';transform:scaleX(0.8348);transform-origin:0 0;">36</div>
<div class="ab" style="left:0;top:632px;width:26px;height:1px;background:#cfcfcf"></div>
<div class="ab tx" style="left:29.50px;top:637.00px;font-size:14px;line-height:14px;color:#161616;font-weight:normal;font-family:'Liberation Sans';transform:scaleX(0.9862);transform-origin:0 0;">325</div>
<div class="ab tx" style="left:127.50px;top:637.00px;font-size:14px;line-height:14px;color:#161616;font-weight:normal;font-family:'Liberation Sans';transform:scaleX(0.9920);transform-origin:0 0;">Develop comprehensive management plan</div>
<div class="ab tx" style="left:606.50px;top:637.00px;font-size:14px;line-height:14px;color:#161616;font-weight:normal;font-family:'Liberation Sans';transform:scaleX(1.0313);transform-origin:0 0;">5/3/2023 0:00</div>
<div class="ab tx" style="left:713.50px;top:637.00px;font-size:14px;line-height:14px;color:#161616;font-weight:normal;font-family:'Liberation Sans';transform:scaleX(0.9808);transform-origin:0 0;">Low</div>
<div class="ab tx" style="left:783.50px;top:637.00px;font-size:14px;line-height:14px;color:#161616;font-weight:normal;font-family:'Liberation Sans';transform:scaleX(0.9790);transform-origin:0 0;">On Hold</div>
<div class="ab tx" style="left:862.50px;top:637.00px;font-size:14px;line-height:14px;color:#161616;font-weight:normal;font-family:'Liberation Sans';transform:scaleX(1.0049);transform-origin:0 0;">Appvity.eTask</div>
<div class="ab" style="left:27px;top:654px;width:1031px;height:19px;background:#d9e1f2"></div>
<div class="ab" style="left:27px;top:653px;width:1031px;height:1px;background:#a9bfe4"></div>
<div class="ab tx" style="left:6.00px;top:658.00px;font-size:14px;line-height:14px;color:#222;font-weight:normal;font-family:'Liberation Sans';transform:scaleX(0.8348);transform-origin:0 0;">37</div>
<div class="ab" style="left:0;top:653px;width:26px;height:1px;background:#cfcfcf"></div>
<div class="ab tx" style="left:29.50px;top:658.00px;font-size:14px;line-height:14px;color:#161616;font-weight:normal;font-family:'Liberation Sans';transform:scaleX(0.9862);transform-origin:0 0;">324</div>
<div class="ab tx" style="left:127.50px;top:658.00px;font-size:14px;line-height:14px;color:#161616;font-weight:normal;font-family:'Liberation Sans';transform:scaleX(0.9994);transform-origin:0 0;">Production enhancements</div>
<div class="ab tx" style="left:606.50px;top:658.00px;font-size:14px;line-height:14px;color:#161616;font-weight:normal;font-family:'Liberation Sans';transform:scaleX(1.0313);transform-origin:0 0;">5/2/2023 0:00</div>
<div class="ab tx" style="left:713.50px;top:658.00px;font-size:14px;line-height:14px;color:#161616;font-weight:normal;font-family:'Liberation Sans';transform:scaleX(0.9727);transform-origin:0 0;">High</div>
<div class="ab tx" style="left:783.50px;top:658.00px;font-size:14px;line-height:14px;color:#161616;font-weight:normal;font-family:'Liberation Sans';transform:scaleX(0.9790);transform-origin:0 0;">On Hold</div>
<div class="ab tx" style="left:862.50px;top:658.00px;font-size:14px;line-height:14px;color:#161616;font-weight:normal;font-family:'Liberation Sans';transform:scaleX(1.0049);transform-origin:0 0;">Appvity.eTask</div>
<div class="ab" style="left:27px;top:674px;width:1031px;height:20px;background:#ffffff"></div>
<div class="ab" style="left:124px;top:674px;width:1px;height:20px;background:#dadada"></div>
<div class="ab" style="left:503px;top:674px;width:1px;height:20px;background:#dadada"></div>
<div class="ab" style="left:603px;top:674px;width:1px;height:20px;background:#dadada"></div>
<div class="ab" style="left:710px;top:674px;width:1px;height:20px;background:#dadada"></div>
<div class="ab" style="left:780px;top:674px;width:1px;height:20px;background:#dadada"></div>
<div class="ab" style="left:859px;top:674px;width:1px;height:20px;background:#dadada"></div>
<div class="ab" style="left:952px;top:674px;width:1px;height:20px;background:#dadada"></div>
<div class="ab" style="left:1010px;top:674px;width:1px;height:20px;background:#dadada"></div>
<div class="ab" style="left:27px;top:673px;width:1031px;height:1px;background:#a9bfe4"></div>
<div class="ab tx" style="left:6.00px;top:678.00px;font-size:14px;line-height:14px;color:#222;font-weight:normal;font-family:'Liberation Sans';transform:scaleX(0.8348);transform-origin:0 0;">38</div>
<div class="ab" style="left:0;top:673px;width:26px;height:1px;background:#cfcfcf"></div>
<div class="ab tx" style="left:29.50px;top:678.00px;font-size:14px;line-height:14px;color:#161616;font-weight:normal;font-family:'Liberation Sans';transform:scaleX(0.9862);transform-origin:0 0;">323</div>
<div class="ab tx" style="left:127.50px;top:678.00px;font-size:14px;line-height:14px;color:#161616;font-weight:normal;font-family:'Liberation Sans';transform:scaleX(0.9875);transform-origin:0 0;">Change default fields in dialog</div>
<div class="ab tx" style="left:606.50px;top:678.00px;font-size:14px;line-height:14px;color:#161616;font-weight:normal;font-family:'Liberation Sans';transform:scaleX(1.0313);transform-origin:0 0;">5/1/2023 0:00</div>
<div class="ab tx" style="left:713.50px;top:678.00px;font-size:14px;line-height:14px;color:#161616;font-weight:normal;font-family:'Liberation Sans';transform:scaleX(0.9727);transform-origin:0 0;">High</div>
<div class="ab tx" style="left:783.50px;top:678.00px;font-size:14px;line-height:14px;color:#161616;font-weight:normal;font-family:'Liberation Sans';transform:scaleX(0.9513);transform-origin:0 0;">In Progress</div>
<div class="ab tx" style="left:862.50px;top:678.00px;font-size:14px;line-height:14px;color:#161616;font-weight:normal;font-family:'Liberation Sans';transform:scaleX(1.0049);transform-origin:0 0;">Appvity.eTask</div>
<div class="ab" style="left:27px;top:695px;width:1031px;height:19px;background:#d9e1f2"></div>
<div class="ab" style="left:27px;top:694px;width:1031px;height:1px;background:#a9bfe4"></div>
<div class="ab tx" style="left:6.00px;top:699.00px;font-size:14px;line-height:14px;color:#222;font-weight:normal;font-family:'Liberation Sans';transform:scaleX(0.8348);transform-origin:0 0;">39</div>
<div class="ab" style="left:0;top:694px;width:26px;height:1px;background:#cfcfcf"></div>
<div class="ab tx" style="left:29.50px;top:699.00px;font-size:14px;line-height:14px;color:#161616;font-weight:normal;font-family:'Liberation Sans';transform:scaleX(0.9862);transform-origin:0 0;">322</div>
<div class="ab tx" style="left:127.50px;top:699.00px;font-size:14px;line-height:14px;color:#161616;font-weight:normal;font-family:'Liberation Sans';transform:scaleX(0.9978);transform-origin:0 0;">Remove viewer from user list</div>
<div class="ab tx" style="left:606.50px;top:699.00px;font-size:14px;line-height:14px;color:#161616;font-weight:normal;font-family:'Liberation Sans';transform:scaleX(1.0276);transform-origin:0 0;">4/30/2023 0:00</div>
<div class="ab tx" style="left:713.50px;top:699.00px;font-size:14px;line-height:14px;color:#161616;font-weight:normal;font-family:'Liberation Sans';transform:scaleX(0.9727);transform-origin:0 0;">High</div>
<div class="ab tx" style="left:783.50px;top:699.00px;font-size:14px;line-height:14px;color:#161616;font-weight:normal;font-family:'Liberation Sans';transform:scaleX(1.0085);transform-origin:0 0;">Not Started</div>
<div class="ab tx" style="left:862.50px;top:699.00px;font-size:14px;line-height:14px;color:#161616;font-weight:normal;font-family:'Liberation Sans';transform:scaleX(1.0049);transform-origin:0 0;">Appvity.eTask</div>
<div class="ab" style="left:27px;top:714px;width:1031px;height:1px;background:#a9bfe4"></div>
<div class="ab" style="left:0;top:203px;width:1058px;height:1px;background:#bdbdbd"></div>
<div class="ab" style="left:124.5px;top:202.5px;width:379.5px;height:1.6px;background:#217346"></div>
</div></div>
<div class="ab" style="left:1058px;top:184px;width:19px;height:524px;background:#e8e8e8"></div>
<div class="ab" style="left:1058px;top:204px;width:1px;height:504px;background:#b9b9b9"></div>
<div class="ab" style="left:1060.3px;top:198px;width:14.2px;height:496px;background:#d9d9d9"></div>
<div class="ab" style="left:1060.5px;top:185px;width:14.5px;height:14px;background:#fff;border:1px solid #b4b4b4"></div>
<svg class="ab" style="left:1063.5px;top:189px" width="9" height="6"><path d="M.5 5h8L4.5 .8z" fill="#666"/></svg>
<div class="ab" style="left:1060.5px;top:221.8px;width:14.5px;height:39px;background:#fff;border:1px solid #a8a8a8"></div>
<div class="ab" style="left:1060.5px;top:693.5px;width:14.5px;height:14px;background:#fff;border:1px solid #b4b4b4"></div>
<svg class="ab" style="left:1063.5px;top:698px" width="9" height="6"><path d="M.5 .8h8L4.5 5z" fill="#666"/></svg>
<div class="ab" style="left:0;top:708px;width:1077px;height:21px;background:#e6e6e6;border-top:1px solid #c6c6c6"></div>
<svg class="ab" style="left:18px;top:713px" width="30" height="10"><path d="M5 1L1 5l4 4z" fill="#c4c4c4"/><path d="M26 1l4 4-4 4z" fill="#c4c4c4"/></svg>
<div class="ab" style="left:73px;top:711px;width:1px;height:15px;background:#9a9a9a"></div>
<div class="ab tx" style="left:83.50px;top:710.00px;font-size:12px;line-height:12px;color:#555;font-weight:normal;font-family:'Liberation Sans';transform:scaleX(1.0148);transform-origin:0 0;">Settings</div>
<div class="ab" style="left:138.5px;top:708px;width:151px;height:19px;background:#fff;border-left:1px solid #d0d0d0;border-right:1px solid #d0d0d0"></div>
<div class="ab" style="left:138.5px;top:725px;width:151px;height:2px;background:#217346"></div>
<div class="ab tx" style="left:147.00px;top:710.00px;font-size:12px;line-height:12px;color:#1e6b41;font-weight:bold;font-family:'Liberation Sans';transform:scaleX(1.0114);transform-origin:0 0;">Caldwell Channel#Task</div>
<div class="ab" style="left:313px;top:710.5px;width:15px;height:15px;border-radius:50%;border:1.2px solid #777"></div>
<svg class="ab" style="left:313px;top:710.5px" width="15" height="15"><path d="M7.5 3.5v8M3.5 7.5h8" stroke="#666" stroke-width="1.1"/></svg>
<div class="ab" style="left:643px;top:712px;width:2px;height:2px;background:#aaa"></div>
<div class="ab" style="left:643px;top:716px;width:2px;height:2px;background:#aaa"></div>
<div class="ab" style="left:643px;top:720px;width:2px;height:2px;background:#aaa"></div>
<div class="ab" style="left:656.5px;top:711px;width:401px;height:14px;background:#d9d9d9"></div>
<div class="ab" style="left:656.5px;top:711px;width:14px;height:14px;background:#fff;border:1px solid #c8c8c8"></div>
<svg class="ab" style="left:659px;top:713px" width="9" height="10"><path d="M6 1.5v7L2 5z" fill="#555"/></svg>
<div class="ab" style="left:670px;top:711px;width:170px;height:14px;background:#fff;border:1px solid #c8c8c8"></div>
<div class="ab" style="left:1043.5px;top:711px;width:14px;height:14px;background:#fff;border:1px solid #c8c8c8"></div>
<svg class="ab" style="left:1046px;top:713px" width="9" height="10"><path d="M3 1.5v7L7 5z" fill="#555"/></svg>
<div class="ab" style="left:0;top:729px;width:1395px;height:19px;background:#f3f2f1;border-top:1px solid #d6d6d6"></div>
<div class="ab tx" style="left:4.50px;top:734.00px;font-size:10.5px;line-height:10.5px;color:#505050;font-weight:normal;font-family:'Liberation Sans';transform:scaleX(0.8731);transform-origin:0 0;">Ready</div>
<svg class="ab" style="left:0;top:0" width="1" height="1" viewBox="0 0 1 1" fill="none" stroke="#555" stroke-width="1"><circle cx="55.2" cy="734.6" r="1.7"/><path d="M49.6 737.4c2 .9 4 1.2 5.6 1.2s3.6-.3 5.6-1.2M55.2 738.6v2.6c0 1.6-2.6 2-3.2 4.4"/><path d="M57.2 742.6l2 2 3.4-4"/></svg>
<div class="ab tx" style="left:65.00px;top:734.00px;font-size:10.5px;line-height:10.5px;color:#505050;font-weight:normal;font-family:'Liberation Sans';transform:scaleX(0.9176);transform-origin:0 0;">Accessibility: Good to go</div>
<div class="ab" style="left:1125px;top:730px;width:36px;height:18px;background:#d8d8d8"></div>
<svg class="ab" style="left:1135px;top:732px" width="15" height="14" viewBox="0 0 15 14" fill="none" stroke="#444" stroke-width="1"><rect x="1.5" y="1.5" width="12" height="11"/><path d="M1.5 5.2h12M1.5 8.9h12M5.5 1.5v11M9.5 1.5v11"/></svg>
<svg class="ab" style="left:1171px;top:732px" width="15" height="14" viewBox="0 0 15 14" fill="none" stroke="#555" stroke-width="1"><rect x="1.5" y="1.5" width="12" height="11"/><rect x="4" y="3.5" width="7" height="7"/><path d="M5.5 5.5h4M5.5 7h4M5.5 8.5h4"/></svg>
<svg class="ab" style="left:1207px;top:732px" width="15" height="14" viewBox="0 0 15 14" fill="none" stroke="#555" stroke-width="1"><path d="M1.5 1.5h12v11h-12zM4.5 1.5v5h5v-5"/></svg>
<div class="ab" style="left:1238.5px;top:738.5px;width:7px;height:1px;background:#666"></div>
<div class="ab" style="left:1251px;top:738.5px;width:90px;height:1px;background:#777"></div>
<div class="ab" style="left:1296px;top:733px;width:4px;height:11px;background:#333;border-radius:1px"></div>
<svg class="ab" style="left:1344px;top:734px" width="9" height="9"><path d="M4.5 0.5v8M0.5 4.5h8" stroke="#666" stroke-width="1"/></svg>
<div class="ab tx" style="left:1364.50px;top:735.00px;font-size:10px;line-height:10px;color:#444;font-weight:normal;font-family:'Liberation Sans';transform:scaleX(0.9463);transform-origin:0 0;">115%</div>
<div class="ab" style="left:0;top:748px;width:1482px;height:4px;background:#e3e3e3"></div>
<div class="ab" style="left:1077px;top:184px;width:318px;height:545px;background:#e6e6e6"></div>
<div class="ab" style="left:1076.5px;top:184px;width:1px;height:545px;background:#d2d2d2"></div>
<div class="ab tx" style="left:1087.80px;top:194.00px;font-size:21px;line-height:21px;color:#2a774b;font-weight:normal;font-family:'Liberation Sans';transform:scaleX(0.8680);transform-origin:0 0;">eTask Web Services</div>
<svg class="ab" style="left:1333.5px;top:200.5px" width="9" height="6" viewBox="0 0 9 6"><path d="M.3 .4h8.4L4.5 5.3z" fill="#666"/></svg>
<svg class="ab" style="left:1370.5px;top:199px" width="9.5" height="9" viewBox="0 0 9.5 9"><path d="M.6 .6l8.3 7.9M8.9 .6L.6 8.5" stroke="#555" stroke-width="1.3"/></svg>
<div class="ab" style="left:1088.3px;top:225px;width:296.5px;height:491.5px;background:#f4f4f4;border:1px solid #d2d2d2"></div>
<div class="ab" style="left:1089.3px;top:264.5px;width:294.5px;height:1px;background:#dedede"></div>
<svg class="ab" style="left:1109.5px;top:236px" width="11" height="18" viewBox="0 0 11 18"><path d="M9.8 .8L1.5 9l8.3 8.2" fill="none" stroke="#555" stroke-width="1.2"/></svg>
<div class="ab tx" style="left:1134.00px;top:239.00px;font-size:13.5px;line-height:13.5px;color:#1e1e1e;font-weight:bold;font-family:'Liberation Sans';transform:scaleX(0.8777);transform-origin:0 0;">Caldwell Channel</div>
<div class="ab tx" style="left:1110.00px;top:283.00px;font-size:11.5px;line-height:11.5px;color:#8a8a8a;font-weight:normal;font-family:'Liberation Sans';transform:scaleX(0.9486);transform-origin:0 0;">Work Item</div>
<div class="ab tx" style="left:1159.60px;top:283.00px;font-size:11.5px;line-height:11.5px;color:#a4262c;font-weight:normal;font-family:'Liberation Sans';transform:scaleX(1.1172);transform-origin:0 0;">*</div>
<div class="ab tx" style="left:1110.00px;top:347.00px;font-size:11.5px;line-height:11.5px;color:#8a8a8a;font-weight:normal;font-family:'Liberation Sans';transform:scaleX(0.9143);transform-origin:0 0;">View</div>
<div class="ab tx" style="left:1132.70px;top:347.00px;font-size:11.5px;line-height:11.5px;color:#a4262c;font-weight:normal;font-family:'Liberation Sans';transform:scaleX(1.1172);transform-origin:0 0;">*</div>
<div class="ab tx" style="left:1110.00px;top:410.00px;font-size:11.5px;line-height:11.5px;color:#8a8a8a;font-weight:normal;font-family:'Liberation Sans';transform:scaleX(0.9076);transform-origin:0 0;">Max Row</div>
<div class="ab tx" style="left:1153.60px;top:410.00px;font-size:11.5px;line-height:11.5px;color:#a4262c;font-weight:normal;font-family:'Liberation Sans';transform:scaleX(1.1172);transform-origin:0 0;">*</div>
<div class="ab" style="left:1110px;top:298.5px;width:253px;height:28.899999999999977px;background:#fff;border-radius:4px;box-shadow:0 1px 2.5px rgba(0,0,0,.16)"></div>
<div class="ab" style="left:1110px;top:362.7px;width:253px;height:29.100000000000023px;background:#fff;border-radius:4px;box-shadow:0 1px 2.5px rgba(0,0,0,.16)"></div>
<div class="ab" style="left:1110px;top:426.2px;width:253px;height:28.600000000000023px;background:#fff;border-radius:4px;box-shadow:0 1px 2.5px rgba(0,0,0,.16)"></div>
<div class="ab tx" style="left:1122.00px;top:307.00px;font-size:14.5px;line-height:14.5px;color:#3a3a3a;font-weight:normal;font-family:'Liberation Sans';transform:scaleX(0.7580);transform-origin:0 0;">Task</div>
<div class="ab tx" style="left:1121.40px;top:370.00px;font-size:14.5px;line-height:14.5px;color:#3a3a3a;font-weight:normal;font-family:'Liberation Sans';transform:scaleX(0.8738);transform-origin:0 0;">Default View</div>
<div class="ab tx" style="left:1121.40px;top:434.00px;font-size:14.5px;line-height:14.5px;color:#3a3a3a;font-weight:normal;font-family:'Liberation Sans';transform:scaleX(0.8494);transform-origin:0 0;">30</div>
<svg class="ab" style="left:1349.5px;top:310px" width="10" height="6.5" viewBox="0 0 10 6.5"><path d="M1 1l4 4 4-4" fill="none" stroke="#333" stroke-width="1.4"/></svg>
<svg class="ab" style="left:1349.5px;top:374px" width="10" height="6.5" viewBox="0 0 10 6.5"><path d="M1 1l4 4 4-4" fill="none" stroke="#333" stroke-width="1.4"/></svg>
<div class="ab" style="left:1297.8px;top:472px;width:65px;height:28.6px;background:#740a0f;border-radius:4px"></div>
<div class="ab tx" style="left:1320.30px;top:480.00px;font-size:14.5px;line-height:14.5px;color:#fff;font-weight:bold;font-family:'Liberation Sans';transform:scaleX(0.8688);transform-origin:0 0;">Get</div>
<div class="ab" style="left:1110px;top:513.2px;width:253px;height:29.2px;background:#fff;border-radius:4px;box-shadow:0 1px 2.5px rgba(0,0,0,.16)"></div>
<svg class="ab" style="left:1120.5px;top:520.3px" width="16" height="16" viewBox="0 0 16 16"><rect x=".8" y=".8" width="5.8" height="5.8" rx="1" fill="none" stroke="#666" stroke-width="1.1"/><rect x="8.7" y=".8" width="5.8" height="5.8" rx="1" fill="none" stroke="#666" stroke-width="1.1"/><rect x=".8" y="8.6" width="5.8" height="5.8" rx="1" fill="none" stroke="#666" stroke-width="1.1"/><rect x="8.7" y="8.6" width="5.8" height="5.8" rx="1" fill="none" stroke="#666" stroke-width="1.1"/></svg>
<div class="ab tx" style="left:1147.00px;top:521.00px;font-size:15px;line-height:15px;color:#404040;font-weight:normal;font-family:'Liberation Sans';transform:scaleX(0.8214);transform-origin:0 0;">Format Table</div>
<div class="ab" style="left:1110px;top:556.1px;width:253px;height:28.7px;background:#fff;border-radius:4px;box-shadow:0 1px 2.5px rgba(0,0,0,.16)"></div>
<svg class="ab" style="left:1120.5px;top:562.5px" width="16" height="15" viewBox="0 0 16 15"><path d="M.7 .7h14.3v10H4l-3.3 3.3z" fill="none" stroke="#555" stroke-width="1.1" stroke-linejoin="round"/><circle cx="4.6" cy="5.8" r=".9" fill="#444"/><circle cx="7.85" cy="5.8" r=".9" fill="#444"/><circle cx="11.1" cy="5.8" r=".9" fill="#444"/></svg>
<div class="ab tx" style="left:1146.70px;top:563.00px;font-size:15px;line-height:15px;color:#404040;font-weight:normal;font-family:'Liberation Sans';transform:scaleX(0.8030);transform-origin:0 0;">Review Local Changes</div>
<div class="ab" style="left:1110px;top:597.4px;width:253px;height:61.4px;background:#fff;border-radius:4px;box-shadow:0 1px 2.5px rgba(0,0,0,.16);overflow:hidden"><div class="ab" style="left:0;top:28.9px;width:253px;height:27.2px;background:#f1f1f1"></div><div class="ab" style="left:238px;top:28.9px;width:15px;height:32.5px;background:#ececec"></div><div class="ab" style="left:215.5px;top:0;width:1px;height:28.9px;background:#e8e8e8"></div></div>
<div class="ab tx" style="left:1121.10px;top:606.00px;font-size:14.5px;line-height:14.5px;color:#666;font-weight:normal;font-family:'Liberation Sans';transform:scaleX(0.8304);transform-origin:0 0;">Changes</div>
<svg class="ab" style="left:1336.8px;top:603.6999999999999px" width="15.4" height="15.4" viewBox="-8 -8 16 16"><path d="M5.6 -3.2A6.2 6.2 0 0 0 -6 1.2" fill="none" stroke="#444" stroke-width="1.35"/><path d="M-5.6 3.2A6.2 6.2 0 0 0 6 -1.2" fill="none" stroke="#444" stroke-width="1.35"/><path d="M7.2 -7.2v5.6h-5.6z" fill="#444"/><path d="M-7.2 7.2v-5.6h5.6z" fill="#444"/></svg>
<div class="ab tx" style="left:1121.00px;top:633.00px;font-size:14.5px;line-height:14.5px;color:#303030;font-weight:normal;font-family:'Liberation Sans';transform:scaleX(0.8399);transform-origin:0 0;">Create - A30:S30</div>
<svg class="ab" style="left:1321.6px;top:631.3px" width="15.4" height="15.4" viewBox="-8 -8 16 16"><path d="M5.6 -3.2A6.2 6.2 0 0 0 -6 1.2" fill="none" stroke="#444" stroke-width="1.35"/><path d="M-5.6 3.2A6.2 6.2 0 0 0 6 -1.2" fill="none" stroke="#444" stroke-width="1.35"/><path d="M7.2 -7.2v5.6h-5.6z" fill="#444"/><path d="M-7.2 7.2v-5.6h5.6z" fill="#444"/></svg>
<svg class="ab" style="left:1351px;top:632.5px" width="8" height="5" viewBox="0 0 8 5"><path d="M.5 4.5h7L4 .5z" fill="#555"/></svg>
<svg class="ab" style="left:1351px;top:648px" width="8" height="5" viewBox="0 0 8 5"><path d="M.5 .5h7L4 4.5z" fill="#aaa"/></svg>
<div class="ab tx" style="left:1110.00px;top:695.00px;font-size:11.5px;line-height:11.5px;color:#8a8a8a;font-weight:normal;font-family:'Liberation Sans';transform:scaleX(0.8979);transform-origin:0 0;">Version: 1.1.0.17</div>
<svg class="ab" style="left:1270px;top:690px" width="19" height="19" viewBox="0 0 19 19"><circle cx="9.4" cy="9.4" r="7.7" fill="#fff" stroke="#f5b000" stroke-width="3.2"/><path d="M0.4 5.9C4 6.5 7.5 9.5 9.4 13.2C11.3 9.5 14.8 6.5 18.4 5.9L18.4 9.6C14.5 10.3 11.5 12.5 9.4 15.8C7.3 12.5 4.3 10.3 .4 9.6Z" fill="#6e0b14"/></svg>
<div class="ab tx" style="left:1291.20px;top:688.00px;font-size:19px;line-height:19px;color:#333;font-weight:normal;font-family:'Liberation Sans';transform:scaleX(1.1609);transform-origin:0 0;-webkit-text-stroke:.9px #333;">app</div>
<div class="ab tx" style="left:1328.50px;top:688.00px;font-size:19px;line-height:19px;color:#c2c2c2;font-weight:normal;font-family:'Liberation Sans';transform:scaleX(1.1895);transform-origin:0 0;-webkit-text-stroke:.9px #c2c2c2;">vity</div>
<div class="ab" style="left:99.2px;top:445px;width:3.4px;height:62.5px;background:#e8142a;border-radius:2px"></div>
<div class="ab" style="left:274px;top:445px;width:3.4px;height:64.5px;background:#e8142a;border-radius:2px"></div>
<div class="ab" style="left:1025px;top:567px;width:83.5px;height:3.6px;background:#e8142a;border-radius:2px"></div>
<div class="ab" style="left:1364px;top:610.3px;width:95px;height:3.5px;background:#e8142a;border-radius:2px"></div>
<div class="ab" style="left:1343px;top:640.8px;width:115px;height:3.5px;background:#e8142a;border-radius:2px"></div>
<div class="ab" style="left:85.30000000000001px;top:420.9px;width:33.2px;height:33.2px;border-radius:50%;background:#e3150f;box-shadow:0 0 0 .6px #b01010"></div>
<div class="ab tx" style="left:95.90px;top:428.00px;font-size:22px;line-height:22px;color:#fff;font-weight:normal;font-family:'Liberation Sans';transform:scaleX(0.9808);transform-origin:0 0;-webkit-text-stroke:.6px #fff;">2</div>
<div class="ab" style="left:259.9px;top:420.9px;width:33.2px;height:33.2px;border-radius:50%;background:#e3150f;box-shadow:0 0 0 .6px #b01010"></div>
<div class="ab tx" style="left:270.50px;top:428.00px;font-size:22px;line-height:22px;color:#fff;font-weight:normal;font-family:'Liberation Sans';transform:scaleX(0.9808);transform-origin:0 0;-webkit-text-stroke:.6px #fff;">3</div>
<div class="ab" style="left:1002.6999999999999px;top:552.1999999999999px;width:33.2px;height:33.2px;border-radius:50%;background:#e3150f;box-shadow:0 0 0 .6px #b01010"></div>
<div class="ab tx" style="left:1013.30px;top:559.00px;font-size:22px;line-height:22px;color:#fff;font-weight:normal;font-family:'Liberation Sans';transform:scaleX(0.9808);transform-origin:0 0;-webkit-text-stroke:.6px #fff;">4</div>
<div class="ab" style="left:1446.8000000000002px;top:595.4px;width:33.2px;height:33.2px;border-radius:50%;background:#e3150f;box-shadow:0 0 0 .6px #b01010"></div>
<div class="ab tx" style="left:1451.65px;top:602.00px;font-size:22px;line-height:22px;color:#fff;font-weight:normal;font-family:'Liberation Sans';transform:scaleX(0.9603);transform-origin:0 0;-webkit-text-stroke:.6px #fff;">5a</div>
<div class="ab" style="left:1446.8000000000002px;top:629.1999999999999px;width:33.2px;height:33.2px;border-radius:50%;background:#e3150f;box-shadow:0 0 0 .6px #b01010"></div>
<div class="ab tx" style="left:1451.65px;top:636.00px;font-size:22px;line-height:22px;color:#fff;font-weight:normal;font-family:'Liberation Sans';transform:scaleX(0.9603);transform-origin:0 0;-webkit-text-stroke:.6px #fff;">5b</div>
<div class="ab" style="left:539.5px;top:489.5px;width:4px;height:4px;border-radius:50%;background:#e8142a"></div>
</body></html>
